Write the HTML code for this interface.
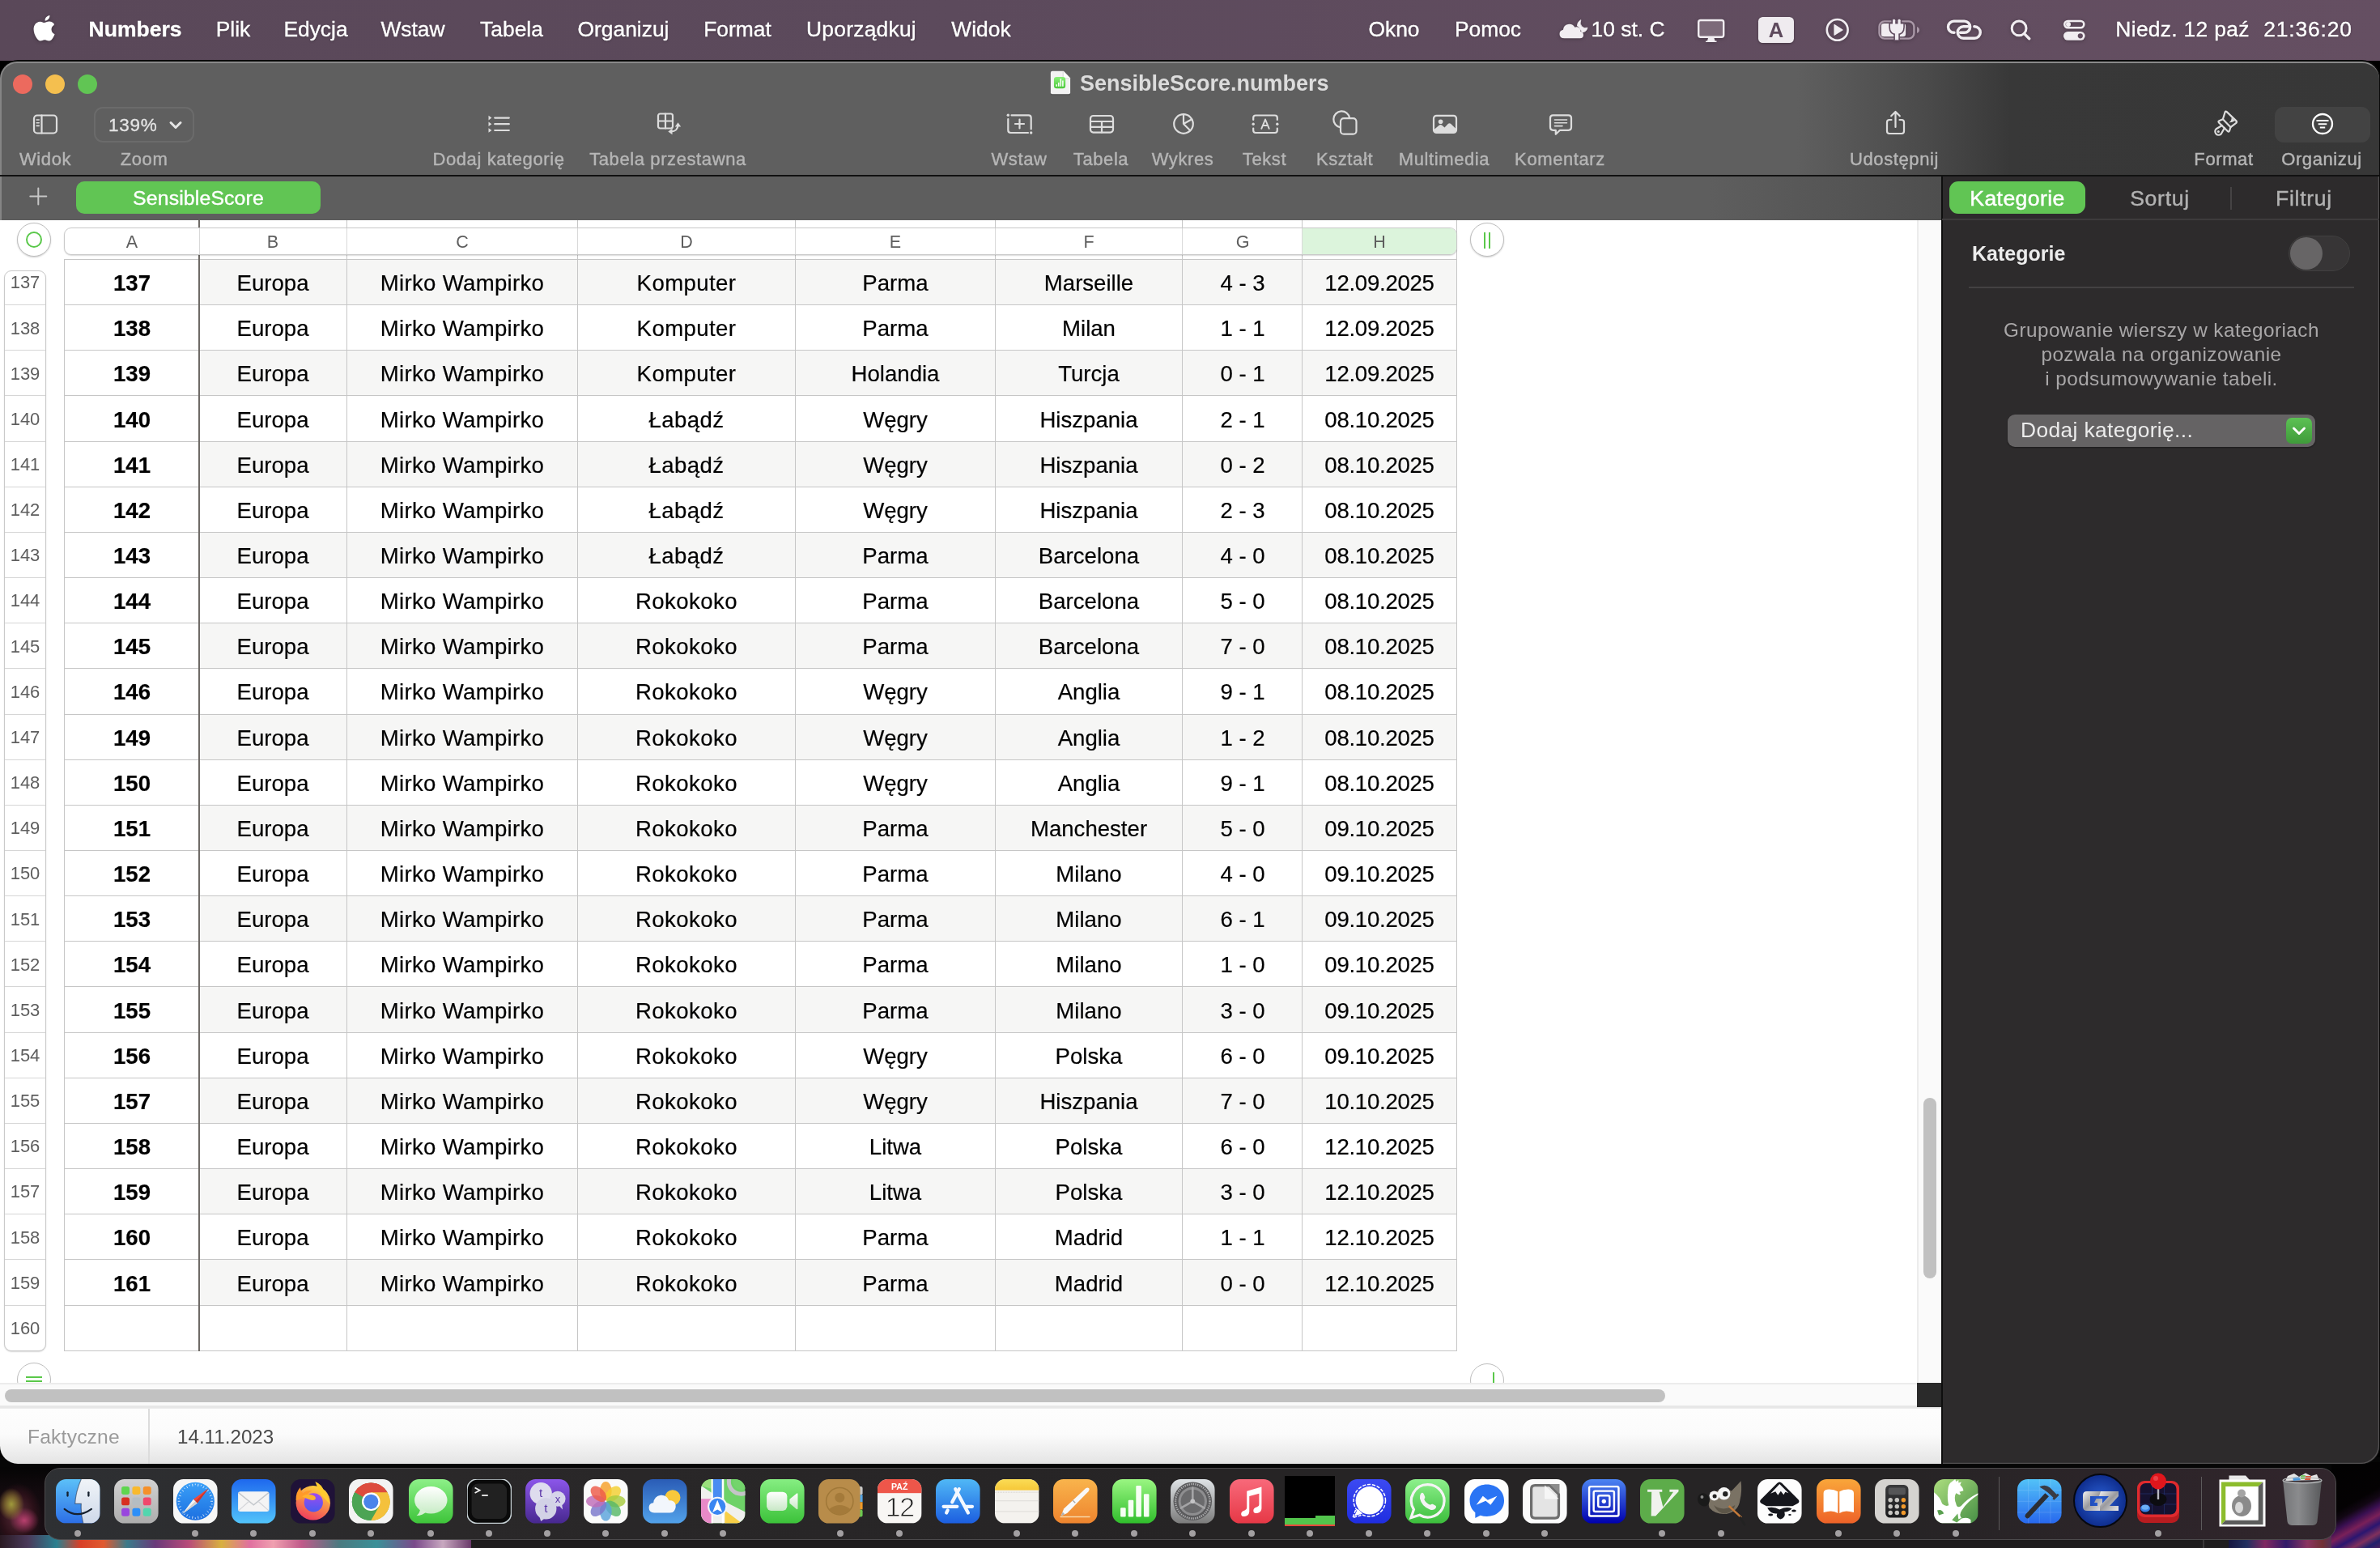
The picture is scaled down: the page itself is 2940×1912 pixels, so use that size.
<!DOCTYPE html>
<html><head><meta charset="utf-8"><title>Numbers</title>
<style>
html,body{margin:0;padding:0;width:2940px;height:1912px;overflow:hidden;}
body{width:2940px;height:1912px;overflow:hidden;position:relative;background:#000;font-family:"Liberation Sans", sans-serif;}
div,svg{box-sizing:border-box;}
.abs{position:absolute;}
.t{will-change:transform;}
#root{position:absolute;left:0;top:0;width:2940px;height:1912px;overflow:hidden;background:#000;}
</style></head><body><div id="root">
<div class="abs" style="left:0;top:1800px;width:2940px;height:112px;background:#060606"></div>
<div class="abs" style="left:582px;top:1896px;width:2171px;height:16px;background:#1f1d1e"></div>
<div class="abs" style="left:2721px;top:1896px;width:2px;height:16px;background:#3a3839"></div>
<div class="abs" style="left:0;top:1812px;width:70px;height:100px;background:radial-gradient(ellipse 16px 20px at 14px 46px,#a09a3c 0%,rgba(140,120,50,.7) 50%,rgba(90,40,50,0) 100%),radial-gradient(ellipse 18px 16px at 30px 66px,#b8406e 0%,rgba(150,50,90,.6) 55%,rgba(80,30,50,0) 100%),radial-gradient(ellipse 30px 40px at 22px 60px,#5a2a38 0%,#2a1018 70%,rgba(10,6,8,0) 100%),linear-gradient(180deg,#050505 0%,#120a0e 30%,#1c1016 100%)"></div>
<div class="abs" style="left:0;top:1896px;width:582px;height:16px;background:linear-gradient(90deg,#2a1a22 0%,#4a3a5a 6%,#2a8090 12%,#d84028 17%,#e05a30 22%,#3a7a8a 27%,#6a3a7a 33%,#b84a7a 40%,#d8b040 47%,#e070a0 53%,#f0a0b0 58%,#c05a8a 64%,#4a7a80 72%,#3a9098 80%,#7a4a8a 88%,#c8a8c0 94%,#6a3a6a 100%)"></div>
<div class="abs" style="left:2753px;top:1896px;width:187px;height:16px;background:linear-gradient(90deg,#161640 0%,#223060 12%,#802860 24%,#301a68 38%,#8a3460 52%,#703034 62%,#303084 76%,#7a2868 88%,#48226e 100%)"></div>
<div class="abs" style="left:2880px;top:1806px;width:60px;height:106px;background:linear-gradient(150deg,#020202 0%,#040203 46%,#120714 54%,#3a1052 62%,#7a2058 70%,#2a1670 78%,#80305c 86%,#20206c 93%,#4a2060 100%)"></div>
<div class="abs" style="left:0;top:0;width:2940px;height:75px;background:linear-gradient(90deg,#5a4859 0%,#5c4a5c 40%,#654f62 100%)"></div>
<svg class="abs" style="left:41px;top:19px;filter:drop-shadow(0 1px 2px rgba(0,0,0,.3))" width="30" height="35" viewBox="0 0 36 42"><path fill="#fff" d="M24.5 0c.2 2-.6 4-1.8 5.400-1.300 1.500-3.300 2.600-5.200 2.500-.3-2 .7-4 1.800-5.200C20.600 1.200 22.800.1 24.500 0zM30.800 14.300c-2.300 1.400-3.800 3.700-3.800 6.500 0 3.300 2 6 4.900 7.100-.6 1.900-1.500 3.700-2.600 5.300-1.600 2.300-3.300 4.600-5.900 4.600-2.600.1-3.400-1.500-6.300-1.500-2.900 0-3.900 1.500-6.300 1.600-2.500.1-4.500-2.500-6.100-4.800C1.400 28.300-1.100 19.800 2.300 14c1.700-2.900 4.700-4.700 8-4.800 2.500 0 4.800 1.700 6.300 1.700 1.500 0 4.400-2.100 7.400-1.800 1.300.1 4.800.5 7.100 3.800z"/></svg>
<div class="t" style="position:absolute;left:-232.75px;top:5.700000000000003px;width:800px;height:60px;line-height:60px;font-size:26.5px;color:#ffffff;font-weight:700;text-align:center;white-space:pre;text-shadow:0 1px 3px rgba(0,0,0,.28);letter-spacing:0px;-webkit-text-stroke:0.35px #fff;">Numbers</div>
<div class="t" style="position:absolute;left:-111.89999999999998px;top:5.700000000000003px;width:800px;height:60px;line-height:60px;font-size:26.4px;color:#ffffff;font-weight:400;text-align:center;white-space:pre;text-shadow:0 1px 3px rgba(0,0,0,.28);letter-spacing:0px;-webkit-text-stroke:0.35px #fff;">Plik</div>
<div class="t" style="position:absolute;left:-10.0px;top:5.700000000000003px;width:800px;height:60px;line-height:60px;font-size:26.4px;color:#ffffff;font-weight:400;text-align:center;white-space:pre;text-shadow:0 1px 3px rgba(0,0,0,.28);letter-spacing:0px;-webkit-text-stroke:0.35px #fff;">Edycja</div>
<div class="t" style="position:absolute;left:110.39999999999998px;top:5.700000000000003px;width:800px;height:60px;line-height:60px;font-size:26.4px;color:#ffffff;font-weight:400;text-align:center;white-space:pre;text-shadow:0 1px 3px rgba(0,0,0,.28);letter-spacing:0px;-webkit-text-stroke:0.35px #fff;">Wstaw</div>
<div class="t" style="position:absolute;left:231.5px;top:5.700000000000003px;width:800px;height:60px;line-height:60px;font-size:26.4px;color:#ffffff;font-weight:400;text-align:center;white-space:pre;text-shadow:0 1px 3px rgba(0,0,0,.28);letter-spacing:0px;-webkit-text-stroke:0.35px #fff;">Tabela</div>
<div class="t" style="position:absolute;left:369.75px;top:5.700000000000003px;width:800px;height:60px;line-height:60px;font-size:26.4px;color:#ffffff;font-weight:400;text-align:center;white-space:pre;text-shadow:0 1px 3px rgba(0,0,0,.28);letter-spacing:0px;-webkit-text-stroke:0.35px #fff;">Organizuj</div>
<div class="t" style="position:absolute;left:511.25px;top:5.700000000000003px;width:800px;height:60px;line-height:60px;font-size:26.4px;color:#ffffff;font-weight:400;text-align:center;white-space:pre;text-shadow:0 1px 3px rgba(0,0,0,.28);letter-spacing:0px;-webkit-text-stroke:0.35px #fff;">Format</div>
<div class="t" style="position:absolute;left:663.625px;top:5.700000000000003px;width:800px;height:60px;line-height:60px;font-size:26.4px;color:#ffffff;font-weight:400;text-align:center;white-space:pre;text-shadow:0 1px 3px rgba(0,0,0,.28);letter-spacing:0.25px;-webkit-text-stroke:0.35px #fff;">Uporządkuj</div>
<div class="t" style="position:absolute;left:812.25px;top:5.700000000000003px;width:800px;height:60px;line-height:60px;font-size:26.4px;color:#ffffff;font-weight:400;text-align:center;white-space:pre;text-shadow:0 1px 3px rgba(0,0,0,.28);letter-spacing:0px;-webkit-text-stroke:0.35px #fff;">Widok</div>
<div class="t" style="position:absolute;left:1321.6px;top:5.700000000000003px;width:800px;height:60px;line-height:60px;font-size:26.4px;color:#ffffff;font-weight:400;text-align:center;white-space:pre;text-shadow:0 1px 3px rgba(0,0,0,.28);letter-spacing:0px;-webkit-text-stroke:0.35px #fff;">Okno</div>
<div class="t" style="position:absolute;left:1437.7px;top:5.700000000000003px;width:800px;height:60px;line-height:60px;font-size:26.4px;color:#ffffff;font-weight:400;text-align:center;white-space:pre;text-shadow:0 1px 3px rgba(0,0,0,.28);letter-spacing:0px;-webkit-text-stroke:0.35px #fff;">Pomoc</div>
<div class="t" style="position:absolute;left:1611.2px;top:5.700000000000003px;width:800px;height:60px;line-height:60px;font-size:26.4px;color:#ffffff;font-weight:400;text-align:center;white-space:pre;text-shadow:0 1px 3px rgba(0,0,0,.28);letter-spacing:0px;-webkit-text-stroke:0.35px #fff;">10 st. C</div>
<div class="t" style="position:absolute;left:2295.85px;top:5.700000000000003px;width:800px;height:60px;line-height:60px;font-size:26.4px;color:#ffffff;font-weight:400;text-align:center;white-space:pre;text-shadow:0 1px 3px rgba(0,0,0,.28);letter-spacing:0.3px;-webkit-text-stroke:0.35px #fff;">Niedz. 12 paź</div>
<div class="t" style="position:absolute;left:2451.175px;top:5.700000000000003px;width:800px;height:60px;line-height:60px;font-size:26.4px;color:#ffffff;font-weight:400;text-align:center;white-space:pre;text-shadow:0 1px 3px rgba(0,0,0,.28);letter-spacing:0.85px;-webkit-text-stroke:0.35px #fff;">21:36:20</div>
<svg class="abs" style="left:1922px;top:20px;filter:drop-shadow(0 1px 2px rgba(0,0,0,.25))" width="44" height="32" viewBox="0 0 44 32"><path fill="#f1edf1" d="M10.500 27.300 Q4.500 27.300 4.500 22 Q4.500 17.600 9 16.800 Q9.400 11.200 15 10 Q20.600 9 23.400 13.800 Q26.200 12.600 28.600 14.600 Q30.600 16.400 30.400 19 Q34 19.800 34 23.200 Q34 27.300 29.800 27.300 Z"/><path fill="#f1edf1" d="M30.800 4.600 Q28.800 9.500 32 12.800 Q35 15.600 39 14.200 Q37.600 19.600 32.200 20 Q31.800 17.600 29.800 16 Q29.200 13.400 26.400 12 Q26.200 7.400 30.800 4.600Z" stroke="#f1edf1" stroke-width="0.800" stroke-linejoin="round"/></svg>
<svg class="abs" style="left:2094px;top:20px;filter:drop-shadow(0 1px 2px rgba(0,0,0,.25))" width="40" height="36" viewBox="0 0 40 36"><rect x="4.200" y="5" width="31" height="20.800" rx="2.500" fill="#7c6a79" stroke="#f1edf1" stroke-width="2.400"/><path fill="#f1edf1" d="M16 27H23.500L24.500 30.500H26.500V31.900H13V30.500H15Z"/></svg>
<div class="abs" style="left:2172px;top:21px;width:44px;height:32px;border-radius:5.500px;background:#efebef;box-shadow:0 1px 3px rgba(0,0,0,.3)"></div>
<div class="t" style="position:absolute;left:1794.0px;top:6.799999999999997px;width:800px;height:60px;line-height:60px;font-size:25.5px;color:#5e4a5d;font-weight:700;text-align:center;white-space:pre;">A</div>
<svg class="abs" style="left:2252px;top:19px;filter:drop-shadow(0 1px 2px rgba(0,0,0,.25))" width="36" height="36" viewBox="0 0 36 36"><circle cx="17.700" cy="17.900" r="12.900" fill="none" stroke="#f1edf1" stroke-width="2.600"/><path fill="#f1edf1" d="M14 11.600L24 17.900L14 24.200Z" stroke="#f1edf1" stroke-width="1.200" stroke-linejoin="round"/></svg>
<svg class="abs" style="left:2316px;top:18px;filter:drop-shadow(0 1px 2px rgba(0,0,0,.25))" width="60" height="36" viewBox="0 0 60 36"><rect x="5.500" y="8.400" width="42.900" height="21.200" rx="6.500" fill="none" stroke="#a998a7" stroke-width="2.400"/><path d="M52 14.900Q55.100 16.200 55.100 19 Q55.100 21.800 52 23.100Z" fill="#a998a7"/><rect x="7.900" y="11.100" width="30.200" height="16.100" rx="3.200" fill="#f1edf1"/><g fill="#5f4b5e" stroke="#5f4b5e" stroke-width="3.200" stroke-linejoin="round"><rect x="22" y="5.800" width="3.200" height="7" rx="1.500"/><rect x="28.500" y="5.800" width="3.200" height="7" rx="1.500"/><path d="M18.900 11.400H35.300V15.500Q35.300 23.700 27.100 23.700Q18.900 23.700 18.900 15.500Z"/><rect x="24.900" y="22" width="4.400" height="9.500"/></g><g fill="#f1edf1"><rect x="22" y="5.800" width="3.200" height="7" rx="1.500"/><rect x="28.500" y="5.800" width="3.200" height="7" rx="1.500"/><path d="M18.900 11.400H35.300V15.500Q35.300 23.700 27.100 23.700Q18.900 23.700 18.900 15.500Z"/><rect x="24.900" y="22" width="4.400" height="9.300"/></g></svg>
<svg class="abs" style="left:2400px;top:18px;filter:drop-shadow(0 1px 2px rgba(0,0,0,.25))" width="54" height="36" viewBox="0 0 54 36"><path d="M14 22.300H13.600A7.100 7.100 0 0 1 13.600 8.100H26.600A7.100 7.100 0 0 1 26.600 22.300H21.500" fill="none" stroke="#f1edf1" stroke-width="3.400" stroke-linecap="round"/><path d="M38.800 14.800H39.100A7.200 7.200 0 0 1 39.100 29.200H25.400A7.200 7.200 0 0 1 25.400 14.800H31.300" fill="none" stroke="#f1edf1" stroke-width="3.400" stroke-linecap="round"/></svg>
<svg class="abs" style="left:2478px;top:18px;filter:drop-shadow(0 1px 2px rgba(0,0,0,.25))" width="36" height="36" viewBox="0 0 36 36"><circle cx="16.100" cy="16.900" r="8.900" fill="none" stroke="#f1edf1" stroke-width="3"/><path d="M22.600 23.600L28.700 29.700" stroke="#f1edf1" stroke-width="3.400" stroke-linecap="round"/></svg>
<svg class="abs" style="left:2544px;top:20px;filter:drop-shadow(0 1px 2px rgba(0,0,0,.25))" width="36" height="34" viewBox="0 0 36 34"><rect x="6.300" y="6" width="24" height="8.200" rx="4.100" fill="none" stroke="#f1edf1" stroke-width="2.600"/><circle cx="11" cy="10.100" r="3" fill="#f1edf1"/><rect x="5" y="18.900" width="26.600" height="10.900" rx="5.450" fill="#f1edf1"/><circle cx="25.800" cy="24.350" r="3.100" fill="#614c5f"/></svg>
<div class="abs" style="left:0;top:74px;width:2940px;height:1735px;background:#0a0a0a;border-radius:22px 22px 22px 22px"></div>
<div class="abs" style="left:0;top:76px;width:2939px;height:142px;border-radius:21px 21px 0 0;background:linear-gradient(90deg,#5f5f5f 0%,#5f5f5f 75.500%,#4a4a4a 81%,#383838 84.500%,#373737 100%);border-top:2px solid #8a8a8a;border-left:2px solid #858585"></div>
<div class="abs" style="left:0;top:216px;width:2939px;height:2px;background:#111"></div>
<div class="abs" style="left:0;top:218px;width:2398px;height:54px;background:linear-gradient(90deg,#5e5e5e 0%,#5e5e5e 88%,#4e4e4e 100%);border-left:2px solid #858585"></div>
<div class="abs" style="left:16px;top:92px;width:24px;height:24px;border-radius:12px;background:#ec6a5e"></div>
<div class="abs" style="left:56px;top:92px;width:24px;height:24px;border-radius:12px;background:#f4bf4f"></div>
<div class="abs" style="left:96px;top:92px;width:24px;height:24px;border-radius:12px;background:#61c554"></div>
<svg class="abs" style="left:1285px;top:78px" width="60" height="50" viewBox="0 0 60 50"><defs><linearGradient id="gti" x1="0" y1="0" x2="0" y2="1"><stop offset="0" stop-color="#8af078"/><stop offset="1" stop-color="#4cc83c"/></linearGradient></defs><path d="M15 9.850H28.700L37.100 18.400V36.200Q37.100 38.300 35 38.300H15Q12.900 38.300 12.900 36.200V12Q12.900 9.850 15 9.850Z" fill="#f3f3f3"/><path d="M28.700 9.850L37.100 18.400H30.700Q28.700 18.400 28.700 16.400Z" fill="#fdfdfd"/><path d="M28.200 10.500V16.600Q28.200 18.900 30.500 18.900H36.600" fill="none" stroke="#d0d0d0" stroke-width=".8"/><rect x="16.950" y="16.950" width="14.250" height="14.250" rx="3.300" fill="url(#gti)"/><path d="M20.200 28.700V26.200M22.800 28.700V23.900M25.350 28.700V19.200M27.900 28.700V21.600" stroke="#fff" stroke-width="1.500"/><path d="M12.900 38.900H37.100" stroke="#3a3a3a" stroke-width=".8" opacity=".5"/></svg>
<div class="t" style="position:absolute;left:1333.7px;top:73.3px;width:1200px;height:60px;line-height:60px;font-size:27px;color:#dcdcdc;font-weight:700;text-align:left;white-space:pre;">SensibleScore.numbers</div>
<div class="t" style="position:absolute;left:-343.7px;top:167.0px;width:800px;height:60px;line-height:60px;font-size:22px;color:#b6b6b6;font-weight:400;text-align:center;white-space:pre;letter-spacing:0.600px;-webkit-text-stroke:0.400px #b6b6b6;">Widok</div>
<div class="t" style="position:absolute;left:-221.7px;top:167.0px;width:800px;height:60px;line-height:60px;font-size:22px;color:#b6b6b6;font-weight:400;text-align:center;white-space:pre;letter-spacing:0.600px;-webkit-text-stroke:0.400px #b6b6b6;">Zoom</div>
<div class="t" style="position:absolute;left:216.29999999999995px;top:167.0px;width:800px;height:60px;line-height:60px;font-size:22px;color:#b6b6b6;font-weight:400;text-align:center;white-space:pre;letter-spacing:0.600px;-webkit-text-stroke:0.400px #b6b6b6;">Dodaj kategorię</div>
<div class="t" style="position:absolute;left:425.29999999999995px;top:167.0px;width:800px;height:60px;line-height:60px;font-size:22px;color:#b6b6b6;font-weight:400;text-align:center;white-space:pre;letter-spacing:0.600px;-webkit-text-stroke:0.400px #b6b6b6;">Tabela przestawna</div>
<div class="t" style="position:absolute;left:859.3px;top:167.0px;width:800px;height:60px;line-height:60px;font-size:22px;color:#b6b6b6;font-weight:400;text-align:center;white-space:pre;letter-spacing:0.600px;-webkit-text-stroke:0.400px #b6b6b6;">Wstaw</div>
<div class="t" style="position:absolute;left:960.3px;top:167.0px;width:800px;height:60px;line-height:60px;font-size:22px;color:#b6b6b6;font-weight:400;text-align:center;white-space:pre;letter-spacing:0.600px;-webkit-text-stroke:0.400px #b6b6b6;">Tabela</div>
<div class="t" style="position:absolute;left:1061.3px;top:167.0px;width:800px;height:60px;line-height:60px;font-size:22px;color:#b6b6b6;font-weight:400;text-align:center;white-space:pre;letter-spacing:0.600px;-webkit-text-stroke:0.400px #b6b6b6;">Wykres</div>
<div class="t" style="position:absolute;left:1162.3px;top:167.0px;width:800px;height:60px;line-height:60px;font-size:22px;color:#b6b6b6;font-weight:400;text-align:center;white-space:pre;letter-spacing:0.600px;-webkit-text-stroke:0.400px #b6b6b6;">Tekst</div>
<div class="t" style="position:absolute;left:1261.3px;top:167.0px;width:800px;height:60px;line-height:60px;font-size:22px;color:#b6b6b6;font-weight:400;text-align:center;white-space:pre;letter-spacing:0.600px;-webkit-text-stroke:0.400px #b6b6b6;">Kształt</div>
<div class="t" style="position:absolute;left:1384.3px;top:167.0px;width:800px;height:60px;line-height:60px;font-size:22px;color:#b6b6b6;font-weight:400;text-align:center;white-space:pre;letter-spacing:0.600px;-webkit-text-stroke:0.400px #b6b6b6;">Multimedia</div>
<div class="t" style="position:absolute;left:1527.3px;top:167.0px;width:800px;height:60px;line-height:60px;font-size:22px;color:#b6b6b6;font-weight:400;text-align:center;white-space:pre;letter-spacing:0.600px;-webkit-text-stroke:0.400px #b6b6b6;">Komentarz</div>
<div class="t" style="position:absolute;left:1940.3000000000002px;top:167.0px;width:800px;height:60px;line-height:60px;font-size:22px;color:#b6b6b6;font-weight:400;text-align:center;white-space:pre;letter-spacing:0.600px;-webkit-text-stroke:0.400px #b6b6b6;">Udostępnij</div>
<div class="t" style="position:absolute;left:2347.3px;top:167.0px;width:800px;height:60px;line-height:60px;font-size:22px;color:#b6b6b6;font-weight:400;text-align:center;white-space:pre;letter-spacing:0.600px;-webkit-text-stroke:0.400px #b6b6b6;">Format</div>
<div class="t" style="position:absolute;left:2468.3px;top:167.0px;width:800px;height:60px;line-height:60px;font-size:22px;color:#b6b6b6;font-weight:400;text-align:center;white-space:pre;letter-spacing:0.600px;-webkit-text-stroke:0.400px #b6b6b6;">Organizuj</div>
<div class="abs" style="left:116px;top:132px;width:124px;height:44px;border-radius:11px;border:2px solid #6b6b6b"></div>
<div class="t" style="position:absolute;left:134px;top:124.5px;width:1200px;height:60px;line-height:60px;font-size:22.5px;color:#e4e4e4;font-weight:400;text-align:left;white-space:pre;letter-spacing:0.700px;-webkit-text-stroke:0.300px #e4e4e4;">139%</div>
<div class="abs" style="left:2810px;top:132px;width:118px;height:44px;border-radius:11px;background:#434343"></div>
<svg class="abs" style="left:35px;top:230px" width="24" height="24" viewBox="0 0 24 24"><path d="M12.300 2.500V22.500M2.300 12.500H22.300" stroke="#c6c6c6" stroke-width="2" stroke-linecap="round"/></svg>
<div class="abs" style="left:94px;top:224px;width:302px;height:40px;border-radius:10px;background:#61c554"></div>
<div class="t" style="position:absolute;left:-155.0px;top:214.6px;width:800px;height:60px;line-height:60px;font-size:24.8px;color:#fff;font-weight:400;text-align:center;white-space:pre;letter-spacing:0.150px;-webkit-text-stroke:0.400px #fff;">SensibleScore</div>
<div class="abs" style="left:0;top:272px;width:2398px;height:1468px;background:#fff"></div>
<div class="abs" style="left:0;top:1736px;width:2398px;height:72px;border-radius:0 0 0 22px;background:linear-gradient(180deg,#e7e7e7 0,#e7e7e7 3.200px,#fdfdfd 4.500px,#fbfbfb 50%,#e4e4e4 100%)"></div>
<div class="abs" style="left:183px;top:1740px;width:2px;height:68px;background:#dcdcdc"></div>
<div class="t" style="position:absolute;left:34px;top:1745.0px;width:1200px;height:60px;line-height:60px;font-size:24.6px;color:#9a9a9a;font-weight:400;text-align:left;white-space:pre;letter-spacing:0.200px;">Faktyczne</div>
<div class="t" style="position:absolute;left:219px;top:1745.0px;width:1200px;height:60px;line-height:60px;font-size:24.2px;color:#4a4a4a;font-weight:400;text-align:left;white-space:pre;">14.11.2023</div>
<div class="abs" style="left:0;top:1708px;width:2368px;height:28px;background:#fafafa;border-top:2px solid #ececec"></div>
<div class="abs" style="left:6px;top:1716px;width:2051px;height:16px;border-radius:8px;background:#c1c1c1"></div>
<div class="abs" style="left:2368px;top:272px;width:30px;height:1436px;background:#fafafa;border-left:2px solid #ececec"></div>
<div class="abs" style="left:2376px;top:1356px;width:16px;height:223px;border-radius:8px;background:#c1c1c1"></div>
<div class="abs" style="left:2368px;top:1708px;width:30px;height:30px;background:#2a2a2a"></div>
<svg class="abs" style="left:38px;top:138px;" width="36" height="30" viewBox="0 0 36 30"><rect x="4" y="4.5" width="28" height="22" rx="4" fill="none" stroke="#dddddd" stroke-width="2.2" stroke-linecap="round" stroke-linejoin="round"/><path d="M13.500 4.500V26.500" fill="none" stroke="#dddddd" stroke-width="2.2" stroke-linecap="round" stroke-linejoin="round"/><path d="M7.200 10h3M7.200 13.700h3M7.200 17.400h3" fill="none" stroke="#dddddd" stroke-width="1.600" stroke-linecap="round"/></svg>
<svg class="abs" style="left:206px;top:146px;" width="22" height="16" viewBox="0 0 22 16"><path d="M5 5.500 L11 11.500 L17 5.500" fill="none" stroke="#e4e4e4" stroke-width="3" stroke-linecap="round" stroke-linejoin="round"/></svg>
<svg class="abs" style="left:602px;top:139px;" width="30" height="30" viewBox="0 0 30 30"><path d="M9.200 6.6H26.800" fill="none" stroke="#dddddd" stroke-width="2.2" stroke-linecap="round" stroke-linejoin="round"/><path d="M1.500 3.8L5.400 6.6L1.500 9.399999999999999Z" fill="#dddddd"/><path d="M9.200 14.2H26.800" fill="none" stroke="#dddddd" stroke-width="2.2" stroke-linecap="round" stroke-linejoin="round"/><path d="M1.500 11.399999999999999L5.400 14.2L1.500 17.0Z" fill="#dddddd"/><path d="M9.200 22H26.800" fill="none" stroke="#dddddd" stroke-width="2.2" stroke-linecap="round" stroke-linejoin="round"/><path d="M1.500 19.2L5.400 22L1.500 24.8Z" fill="#dddddd"/></svg>
<svg class="abs" style="left:808px;top:136px;" width="36" height="32" viewBox="0 0 36 32"><rect x="5" y="4.500" width="18" height="18" rx="2.500" fill="none" stroke="#dddddd" stroke-width="2.2" stroke-linecap="round" stroke-linejoin="round"/><path d="M14 4.500V22.500M5 13.500H23" fill="none" stroke="#dddddd" stroke-width="2.2" stroke-linecap="round" stroke-linejoin="round" stroke-width="2"/><path d="M29.500 18 C29.500 23.500 26 26.500 21 26.500" fill="none" stroke="#dddddd" stroke-width="2.200" stroke-linecap="round"/><path d="M25.800 20.500L29.500 15.300L33.200 20.500Z" fill="#dddddd"/><path d="M22.500 22.800L17.300 26.500L22.500 30.200Z" fill="#dddddd"/></svg>
<svg class="abs" style="left:1240px;top:137px;" width="40" height="32" viewBox="0 0 40 32"><path d="M9.500 5.300H30.500Q33.700 5.300 33.700 8.500V22.500M30 27H8.500Q5.300 27 5.300 23.800V10" fill="none" stroke="#dddddd" stroke-width="2.2" stroke-linecap="round" stroke-linejoin="round"/><circle cx="5.300" cy="5.300" r="1.700" fill="#dddddd"/><circle cx="33.700" cy="27" r="1.700" fill="#dddddd"/><path d="M19.500 10.500V21.500M14 16H25" fill="none" stroke="#dddddd" stroke-width="2.2" stroke-linecap="round" stroke-linejoin="round"/></svg>
<svg class="abs" style="left:1342px;top:138px;" width="38" height="30" viewBox="0 0 38 30"><rect x="5" y="5" width="28" height="20.600" rx="3.500" fill="none" stroke="#dddddd" stroke-width="2.2" stroke-linecap="round" stroke-linejoin="round"/><path d="M5 12H33M5 18.800H33M19 12V25.600" fill="none" stroke="#dddddd" stroke-width="2.2" stroke-linecap="round" stroke-linejoin="round" stroke-width="2"/></svg>
<svg class="abs" style="left:1446px;top:137px;" width="32" height="32" viewBox="0 0 32 32"><circle cx="16" cy="16" r="11.800" fill="none" stroke="#dddddd" stroke-width="2.2" stroke-linecap="round" stroke-linejoin="round"/><path d="M16 4.200V16L26.300 10.300M16 16L24.300 24.300" fill="none" stroke="#dddddd" stroke-width="2.2" stroke-linecap="round" stroke-linejoin="round"/></svg>
<svg class="abs" style="left:1543px;top:137px;" width="40" height="32" viewBox="0 0 40 32"><path d="M5.200 11V8.500Q5.200 5.500 8.200 5.500H31.800Q34.800 5.500 34.800 8.500V11M5.200 21.500V24Q5.200 27 8.200 27H31.800Q34.800 27 34.800 24V21.500" fill="none" stroke="#dddddd" stroke-width="2.2" stroke-linecap="round" stroke-linejoin="round"/><circle cx="5.200" cy="16.200" r="1.700" fill="#dddddd"/><circle cx="34.800" cy="16.200" r="1.700" fill="#dddddd"/><path d="M15.300 21.800L20 10.500L24.700 21.800M17 18H23" fill="none" stroke="#dddddd" stroke-width="1.900" stroke-linecap="round" stroke-linejoin="round"/></svg>
<svg class="abs" style="left:1643px;top:134px;" width="40" height="36" viewBox="0 0 40 36"><path d="M12.800 23.300 A10 10 0 1 1 24.200 11.800" fill="none" stroke="#dddddd" stroke-width="2.2" stroke-linecap="round" stroke-linejoin="round"/><rect x="13" y="12.200" width="19.500" height="19.500" rx="4" fill="none" stroke="#dddddd" stroke-width="2.2" stroke-linecap="round" stroke-linejoin="round"/></svg>
<svg class="abs" style="left:1766px;top:138px;" width="38" height="30" viewBox="0 0 38 30"><rect x="5" y="4.800" width="28" height="21.200" rx="3.500" fill="none" stroke="#dddddd" stroke-width="2.2" stroke-linecap="round" stroke-linejoin="round"/><circle cx="13.600" cy="12.300" r="2.800" fill="#dddddd"/><path d="M5.500 22L12 16.500Q13.500 15.300 15 16.500L18.500 19.500L23 14.800Q24.500 13.500 26 14.800L32.500 21V23Q32.500 25.500 30 25.500H8Q5.500 25.500 5.500 23Z" fill="#dddddd"/></svg>
<svg class="abs" style="left:1910px;top:137px;" width="36" height="34" viewBox="0 0 36 34"><path d="M8.500 5.300H27.500Q31 5.300 31 8.800V20.300Q31 23.800 27.500 23.800H17L11.800 28.800V23.800H8.500Q5 23.800 5 20.300V8.800Q5 5.300 8.500 5.300Z" fill="none" stroke="#dddddd" stroke-width="2.2" stroke-linecap="round" stroke-linejoin="round"/><path d="M10.500 11H25.500M10.500 14.800H25.500M10.500 18.600H20" fill="none" stroke="#dddddd" stroke-width="1.600" stroke-linecap="round"/></svg>
<svg class="abs" style="left:2324px;top:132px;" width="36" height="40" viewBox="0 0 36 40"><path d="M12.500 16H10Q7 16 7 19V30Q7 33 10 33H25Q28 33 28 30V19Q28 16 25 16H22.500" fill="none" stroke="#dddddd" stroke-width="2.2" stroke-linecap="round" stroke-linejoin="round"/><path d="M17.500 6.500V25M12.200 11.300L17.500 6L22.800 11.300" fill="none" stroke="#dddddd" stroke-width="2.2" stroke-linecap="round" stroke-linejoin="round"/></svg>
<svg class="abs" style="left:2720px;top:126px;" width="60" height="52" viewBox="0 0 60 52"><path d="M25.900 21.300L28.500 12.700Q29.200 10.700 30.700 12.100L42.200 23.100Q43.600 24.500 42.300 25.900L35.400 31.100Z" fill="none" stroke="#dddddd" stroke-width="2.2" stroke-linecap="round" stroke-linejoin="round"/><path d="M25.900 21.300L21.400 23.300Q19.700 24.200 21 25.500L32 36.200Q33.300 37.400 34 35.700L35.400 31.100" fill="none" stroke="#dddddd" stroke-width="2.2" stroke-linecap="round" stroke-linejoin="round"/><path d="M24.800 29L17.600 33.300A4.300 4.300 0 1 0 23.700 39.500L27.900 32" fill="none" stroke="#dddddd" stroke-width="2.2" stroke-linecap="round" stroke-linejoin="round"/><circle cx="20.400" cy="36.500" r="1.500" fill="#dddddd"/><path d="M33.300 25.400Q36.800 23.800 36.600 19.300L40.800 23.300Q38 25.300 33.300 25.400Z" fill="#dddddd"/></svg>
<svg class="abs" style="left:2853px;top:137px;" width="32" height="32" viewBox="0 0 32 32"><circle cx="16" cy="16" r="12" fill="none" stroke="#fff" stroke-width="2.300"/><path d="M8.500 12H23.500M10.700 16.300H21.300M12.800 20.600H19.200" fill="none" stroke="#fff" stroke-width="2" stroke-linecap="butt"/></svg>
<div class="abs" style="left:21px;top:275px;width:42px;height:42px;border-radius:21px;background:#fff;border:1.5px solid #bdbdbd;box-shadow:0 1px 2px rgba(0,0,0,.18)"></div>
<div class="abs" style="left:32px;top:286px;width:20px;height:20px;border-radius:10px;border:2px solid #5ac84a"></div>
<div class="abs" style="left:1816px;top:275px;width:42px;height:42px;border-radius:21px;background:#fff;border:1.5px solid #bdbdbd;box-shadow:0 1px 2px rgba(0,0,0,.18)"></div>
<div class="abs" style="left:1833px;top:287px;width:2px;height:20px;background:#5ac84a"></div>
<div class="abs" style="left:1839px;top:287px;width:2px;height:20px;background:#5ac84a"></div>
<div class="abs" style="left:0;top:1680px;width:2369px;height:28px;overflow:hidden"><div class="abs" style="left:21px;top:3px;width:42px;height:42px;border-radius:21px;border:1.5px solid #bdbdbd;background:#fff"></div><div class="abs" style="left:32px;top:20px;width:20px;height:2px;background:#5ac84a"></div><div class="abs" style="left:32px;top:25px;width:20px;height:2px;background:#5ac84a"></div><div class="abs" style="left:1816px;top:4px;width:42px;height:42px;border-radius:21px;border:1.5px solid #bdbdbd;background:#fff"></div><div class="abs" style="left:1844px;top:15px;width:2px;height:14px;background:#5ac84a"></div></div>
<div class="abs" style="left:5px;top:334px;width:52px;height:1335px;border-radius:9px;background:#fff;border:1px solid #c9c9c9;box-shadow:0 1px 1.5px rgba(0,0,0,.15)"></div>
<div class="abs" style="left:247px;top:320.50px;width:1552.5px;height:56.16px;background:#f6f6f5"></div>
<div class="abs" style="left:247px;top:432.81px;width:1552.5px;height:56.16px;background:#f6f6f5"></div>
<div class="abs" style="left:247px;top:545.12px;width:1552.5px;height:56.16px;background:#f6f6f5"></div>
<div class="abs" style="left:247px;top:657.44px;width:1552.5px;height:56.16px;background:#f6f6f5"></div>
<div class="abs" style="left:247px;top:769.75px;width:1552.5px;height:56.16px;background:#f6f6f5"></div>
<div class="abs" style="left:247px;top:882.06px;width:1552.5px;height:56.16px;background:#f6f6f5"></div>
<div class="abs" style="left:247px;top:994.37px;width:1552.5px;height:56.16px;background:#f6f6f5"></div>
<div class="abs" style="left:247px;top:1106.68px;width:1552.5px;height:56.16px;background:#f6f6f5"></div>
<div class="abs" style="left:247px;top:1219.00px;width:1552.5px;height:56.16px;background:#f6f6f5"></div>
<div class="abs" style="left:247px;top:1331.31px;width:1552.5px;height:56.16px;background:#f6f6f5"></div>
<div class="abs" style="left:247px;top:1443.62px;width:1552.5px;height:56.16px;background:#f6f6f5"></div>
<div class="abs" style="left:247px;top:1555.93px;width:1552.5px;height:56.16px;background:#f6f6f5"></div>
<div class="t" style="position:absolute;left:-369.0px;top:319.378px;width:800px;height:60px;line-height:60px;font-size:22px;color:#5e5e5e;font-weight:400;text-align:center;white-space:pre;">137</div>
<div class="t" style="position:absolute;left:-237.25px;top:320.078px;width:800px;height:60px;line-height:60px;font-size:27.6px;color:#000;font-weight:700;text-align:center;white-space:pre;-webkit-text-stroke:0.200px #000;letter-spacing:0px;">137</div>
<div class="t" style="position:absolute;left:-63.0px;top:320.078px;width:800px;height:60px;line-height:60px;font-size:27.6px;color:#000;font-weight:400;text-align:center;white-space:pre;-webkit-text-stroke:0.200px #000;letter-spacing:0px;">Europa</div>
<div class="t" style="position:absolute;left:170.89999999999998px;top:320.078px;width:800px;height:60px;line-height:60px;font-size:27.6px;color:#000;font-weight:400;text-align:center;white-space:pre;-webkit-text-stroke:0.200px #000;letter-spacing:0.3px;">Mirko Wampirko</div>
<div class="t" style="position:absolute;left:448.20000000000005px;top:320.078px;width:800px;height:60px;line-height:60px;font-size:27.6px;color:#000;font-weight:400;text-align:center;white-space:pre;-webkit-text-stroke:0.200px #000;letter-spacing:0.4px;">Komputer</div>
<div class="t" style="position:absolute;left:705.875px;top:320.078px;width:800px;height:60px;line-height:60px;font-size:27.6px;color:#000;font-weight:400;text-align:center;white-space:pre;-webkit-text-stroke:0.200px #000;letter-spacing:0px;">Parma</div>
<div class="t" style="position:absolute;left:944.875px;top:320.078px;width:800px;height:60px;line-height:60px;font-size:27.6px;color:#000;font-weight:400;text-align:center;white-space:pre;-webkit-text-stroke:0.200px #000;letter-spacing:0px;">Marseille</div>
<div class="t" style="position:absolute;left:1134.5px;top:320.078px;width:800px;height:60px;line-height:60px;font-size:27.6px;color:#000;font-weight:400;text-align:center;white-space:pre;-webkit-text-stroke:0.200px #000;letter-spacing:0px;">4 - 3</div>
<div class="t" style="position:absolute;left:1303.86px;top:320.078px;width:800px;height:60px;line-height:60px;font-size:27.6px;color:#000;font-weight:400;text-align:center;white-space:pre;-webkit-text-stroke:0.200px #000;letter-spacing:-0.28px;">12.09.2025</div>
<div class="t" style="position:absolute;left:-369.0px;top:375.534px;width:800px;height:60px;line-height:60px;font-size:22px;color:#5e5e5e;font-weight:400;text-align:center;white-space:pre;">138</div>
<div class="t" style="position:absolute;left:-237.25px;top:376.234px;width:800px;height:60px;line-height:60px;font-size:27.6px;color:#000;font-weight:700;text-align:center;white-space:pre;-webkit-text-stroke:0.200px #000;letter-spacing:0px;">138</div>
<div class="t" style="position:absolute;left:-63.0px;top:376.234px;width:800px;height:60px;line-height:60px;font-size:27.6px;color:#000;font-weight:400;text-align:center;white-space:pre;-webkit-text-stroke:0.200px #000;letter-spacing:0px;">Europa</div>
<div class="t" style="position:absolute;left:170.89999999999998px;top:376.234px;width:800px;height:60px;line-height:60px;font-size:27.6px;color:#000;font-weight:400;text-align:center;white-space:pre;-webkit-text-stroke:0.200px #000;letter-spacing:0.3px;">Mirko Wampirko</div>
<div class="t" style="position:absolute;left:448.20000000000005px;top:376.234px;width:800px;height:60px;line-height:60px;font-size:27.6px;color:#000;font-weight:400;text-align:center;white-space:pre;-webkit-text-stroke:0.200px #000;letter-spacing:0.4px;">Komputer</div>
<div class="t" style="position:absolute;left:705.875px;top:376.234px;width:800px;height:60px;line-height:60px;font-size:27.6px;color:#000;font-weight:400;text-align:center;white-space:pre;-webkit-text-stroke:0.200px #000;letter-spacing:0px;">Parma</div>
<div class="t" style="position:absolute;left:944.875px;top:376.234px;width:800px;height:60px;line-height:60px;font-size:27.6px;color:#000;font-weight:400;text-align:center;white-space:pre;-webkit-text-stroke:0.200px #000;letter-spacing:0px;">Milan</div>
<div class="t" style="position:absolute;left:1134.5px;top:376.234px;width:800px;height:60px;line-height:60px;font-size:27.6px;color:#000;font-weight:400;text-align:center;white-space:pre;-webkit-text-stroke:0.200px #000;letter-spacing:0px;">1 - 1</div>
<div class="t" style="position:absolute;left:1303.86px;top:376.234px;width:800px;height:60px;line-height:60px;font-size:27.6px;color:#000;font-weight:400;text-align:center;white-space:pre;-webkit-text-stroke:0.200px #000;letter-spacing:-0.28px;">12.09.2025</div>
<div class="t" style="position:absolute;left:-369.0px;top:431.69px;width:800px;height:60px;line-height:60px;font-size:22px;color:#5e5e5e;font-weight:400;text-align:center;white-space:pre;">139</div>
<div class="t" style="position:absolute;left:-237.25px;top:432.39px;width:800px;height:60px;line-height:60px;font-size:27.6px;color:#000;font-weight:700;text-align:center;white-space:pre;-webkit-text-stroke:0.200px #000;letter-spacing:0px;">139</div>
<div class="t" style="position:absolute;left:-63.0px;top:432.39px;width:800px;height:60px;line-height:60px;font-size:27.6px;color:#000;font-weight:400;text-align:center;white-space:pre;-webkit-text-stroke:0.200px #000;letter-spacing:0px;">Europa</div>
<div class="t" style="position:absolute;left:170.89999999999998px;top:432.39px;width:800px;height:60px;line-height:60px;font-size:27.6px;color:#000;font-weight:400;text-align:center;white-space:pre;-webkit-text-stroke:0.200px #000;letter-spacing:0.3px;">Mirko Wampirko</div>
<div class="t" style="position:absolute;left:448.20000000000005px;top:432.39px;width:800px;height:60px;line-height:60px;font-size:27.6px;color:#000;font-weight:400;text-align:center;white-space:pre;-webkit-text-stroke:0.200px #000;letter-spacing:0.4px;">Komputer</div>
<div class="t" style="position:absolute;left:705.875px;top:432.39px;width:800px;height:60px;line-height:60px;font-size:27.6px;color:#000;font-weight:400;text-align:center;white-space:pre;-webkit-text-stroke:0.200px #000;letter-spacing:0px;">Holandia</div>
<div class="t" style="position:absolute;left:944.875px;top:432.39px;width:800px;height:60px;line-height:60px;font-size:27.6px;color:#000;font-weight:400;text-align:center;white-space:pre;-webkit-text-stroke:0.200px #000;letter-spacing:0px;">Turcja</div>
<div class="t" style="position:absolute;left:1134.5px;top:432.39px;width:800px;height:60px;line-height:60px;font-size:27.6px;color:#000;font-weight:400;text-align:center;white-space:pre;-webkit-text-stroke:0.200px #000;letter-spacing:0px;">0 - 1</div>
<div class="t" style="position:absolute;left:1303.86px;top:432.39px;width:800px;height:60px;line-height:60px;font-size:27.6px;color:#000;font-weight:400;text-align:center;white-space:pre;-webkit-text-stroke:0.200px #000;letter-spacing:-0.28px;">12.09.2025</div>
<div class="t" style="position:absolute;left:-369.0px;top:487.8459999999999px;width:800px;height:60px;line-height:60px;font-size:22px;color:#5e5e5e;font-weight:400;text-align:center;white-space:pre;">140</div>
<div class="t" style="position:absolute;left:-237.25px;top:488.54599999999994px;width:800px;height:60px;line-height:60px;font-size:27.6px;color:#000;font-weight:700;text-align:center;white-space:pre;-webkit-text-stroke:0.200px #000;letter-spacing:0px;">140</div>
<div class="t" style="position:absolute;left:-63.0px;top:488.54599999999994px;width:800px;height:60px;line-height:60px;font-size:27.6px;color:#000;font-weight:400;text-align:center;white-space:pre;-webkit-text-stroke:0.200px #000;letter-spacing:0px;">Europa</div>
<div class="t" style="position:absolute;left:170.89999999999998px;top:488.54599999999994px;width:800px;height:60px;line-height:60px;font-size:27.6px;color:#000;font-weight:400;text-align:center;white-space:pre;-webkit-text-stroke:0.200px #000;letter-spacing:0.3px;">Mirko Wampirko</div>
<div class="t" style="position:absolute;left:448.20000000000005px;top:488.54599999999994px;width:800px;height:60px;line-height:60px;font-size:27.6px;color:#000;font-weight:400;text-align:center;white-space:pre;-webkit-text-stroke:0.200px #000;letter-spacing:0.4px;">Łabądź</div>
<div class="t" style="position:absolute;left:705.875px;top:488.54599999999994px;width:800px;height:60px;line-height:60px;font-size:27.6px;color:#000;font-weight:400;text-align:center;white-space:pre;-webkit-text-stroke:0.200px #000;letter-spacing:0px;">Węgry</div>
<div class="t" style="position:absolute;left:944.875px;top:488.54599999999994px;width:800px;height:60px;line-height:60px;font-size:27.6px;color:#000;font-weight:400;text-align:center;white-space:pre;-webkit-text-stroke:0.200px #000;letter-spacing:0px;">Hiszpania</div>
<div class="t" style="position:absolute;left:1134.5px;top:488.54599999999994px;width:800px;height:60px;line-height:60px;font-size:27.6px;color:#000;font-weight:400;text-align:center;white-space:pre;-webkit-text-stroke:0.200px #000;letter-spacing:0px;">2 - 1</div>
<div class="t" style="position:absolute;left:1303.86px;top:488.54599999999994px;width:800px;height:60px;line-height:60px;font-size:27.6px;color:#000;font-weight:400;text-align:center;white-space:pre;-webkit-text-stroke:0.200px #000;letter-spacing:-0.28px;">08.10.2025</div>
<div class="t" style="position:absolute;left:-369.0px;top:544.002px;width:800px;height:60px;line-height:60px;font-size:22px;color:#5e5e5e;font-weight:400;text-align:center;white-space:pre;">141</div>
<div class="t" style="position:absolute;left:-237.25px;top:544.702px;width:800px;height:60px;line-height:60px;font-size:27.6px;color:#000;font-weight:700;text-align:center;white-space:pre;-webkit-text-stroke:0.200px #000;letter-spacing:0px;">141</div>
<div class="t" style="position:absolute;left:-63.0px;top:544.702px;width:800px;height:60px;line-height:60px;font-size:27.6px;color:#000;font-weight:400;text-align:center;white-space:pre;-webkit-text-stroke:0.200px #000;letter-spacing:0px;">Europa</div>
<div class="t" style="position:absolute;left:170.89999999999998px;top:544.702px;width:800px;height:60px;line-height:60px;font-size:27.6px;color:#000;font-weight:400;text-align:center;white-space:pre;-webkit-text-stroke:0.200px #000;letter-spacing:0.3px;">Mirko Wampirko</div>
<div class="t" style="position:absolute;left:448.20000000000005px;top:544.702px;width:800px;height:60px;line-height:60px;font-size:27.6px;color:#000;font-weight:400;text-align:center;white-space:pre;-webkit-text-stroke:0.200px #000;letter-spacing:0.4px;">Łabądź</div>
<div class="t" style="position:absolute;left:705.875px;top:544.702px;width:800px;height:60px;line-height:60px;font-size:27.6px;color:#000;font-weight:400;text-align:center;white-space:pre;-webkit-text-stroke:0.200px #000;letter-spacing:0px;">Węgry</div>
<div class="t" style="position:absolute;left:944.875px;top:544.702px;width:800px;height:60px;line-height:60px;font-size:27.6px;color:#000;font-weight:400;text-align:center;white-space:pre;-webkit-text-stroke:0.200px #000;letter-spacing:0px;">Hiszpania</div>
<div class="t" style="position:absolute;left:1134.5px;top:544.702px;width:800px;height:60px;line-height:60px;font-size:27.6px;color:#000;font-weight:400;text-align:center;white-space:pre;-webkit-text-stroke:0.200px #000;letter-spacing:0px;">0 - 2</div>
<div class="t" style="position:absolute;left:1303.86px;top:544.702px;width:800px;height:60px;line-height:60px;font-size:27.6px;color:#000;font-weight:400;text-align:center;white-space:pre;-webkit-text-stroke:0.200px #000;letter-spacing:-0.28px;">08.10.2025</div>
<div class="t" style="position:absolute;left:-369.0px;top:600.1579999999999px;width:800px;height:60px;line-height:60px;font-size:22px;color:#5e5e5e;font-weight:400;text-align:center;white-space:pre;">142</div>
<div class="t" style="position:absolute;left:-237.25px;top:600.858px;width:800px;height:60px;line-height:60px;font-size:27.6px;color:#000;font-weight:700;text-align:center;white-space:pre;-webkit-text-stroke:0.200px #000;letter-spacing:0px;">142</div>
<div class="t" style="position:absolute;left:-63.0px;top:600.858px;width:800px;height:60px;line-height:60px;font-size:27.6px;color:#000;font-weight:400;text-align:center;white-space:pre;-webkit-text-stroke:0.200px #000;letter-spacing:0px;">Europa</div>
<div class="t" style="position:absolute;left:170.89999999999998px;top:600.858px;width:800px;height:60px;line-height:60px;font-size:27.6px;color:#000;font-weight:400;text-align:center;white-space:pre;-webkit-text-stroke:0.200px #000;letter-spacing:0.3px;">Mirko Wampirko</div>
<div class="t" style="position:absolute;left:448.20000000000005px;top:600.858px;width:800px;height:60px;line-height:60px;font-size:27.6px;color:#000;font-weight:400;text-align:center;white-space:pre;-webkit-text-stroke:0.200px #000;letter-spacing:0.4px;">Łabądź</div>
<div class="t" style="position:absolute;left:705.875px;top:600.858px;width:800px;height:60px;line-height:60px;font-size:27.6px;color:#000;font-weight:400;text-align:center;white-space:pre;-webkit-text-stroke:0.200px #000;letter-spacing:0px;">Węgry</div>
<div class="t" style="position:absolute;left:944.875px;top:600.858px;width:800px;height:60px;line-height:60px;font-size:27.6px;color:#000;font-weight:400;text-align:center;white-space:pre;-webkit-text-stroke:0.200px #000;letter-spacing:0px;">Hiszpania</div>
<div class="t" style="position:absolute;left:1134.5px;top:600.858px;width:800px;height:60px;line-height:60px;font-size:27.6px;color:#000;font-weight:400;text-align:center;white-space:pre;-webkit-text-stroke:0.200px #000;letter-spacing:0px;">2 - 3</div>
<div class="t" style="position:absolute;left:1303.86px;top:600.858px;width:800px;height:60px;line-height:60px;font-size:27.6px;color:#000;font-weight:400;text-align:center;white-space:pre;-webkit-text-stroke:0.200px #000;letter-spacing:-0.28px;">08.10.2025</div>
<div class="t" style="position:absolute;left:-369.0px;top:656.3139999999999px;width:800px;height:60px;line-height:60px;font-size:22px;color:#5e5e5e;font-weight:400;text-align:center;white-space:pre;">143</div>
<div class="t" style="position:absolute;left:-237.25px;top:657.0139999999999px;width:800px;height:60px;line-height:60px;font-size:27.6px;color:#000;font-weight:700;text-align:center;white-space:pre;-webkit-text-stroke:0.200px #000;letter-spacing:0px;">143</div>
<div class="t" style="position:absolute;left:-63.0px;top:657.0139999999999px;width:800px;height:60px;line-height:60px;font-size:27.6px;color:#000;font-weight:400;text-align:center;white-space:pre;-webkit-text-stroke:0.200px #000;letter-spacing:0px;">Europa</div>
<div class="t" style="position:absolute;left:170.89999999999998px;top:657.0139999999999px;width:800px;height:60px;line-height:60px;font-size:27.6px;color:#000;font-weight:400;text-align:center;white-space:pre;-webkit-text-stroke:0.200px #000;letter-spacing:0.3px;">Mirko Wampirko</div>
<div class="t" style="position:absolute;left:448.20000000000005px;top:657.0139999999999px;width:800px;height:60px;line-height:60px;font-size:27.6px;color:#000;font-weight:400;text-align:center;white-space:pre;-webkit-text-stroke:0.200px #000;letter-spacing:0.4px;">Łabądź</div>
<div class="t" style="position:absolute;left:705.875px;top:657.0139999999999px;width:800px;height:60px;line-height:60px;font-size:27.6px;color:#000;font-weight:400;text-align:center;white-space:pre;-webkit-text-stroke:0.200px #000;letter-spacing:0px;">Parma</div>
<div class="t" style="position:absolute;left:944.875px;top:657.0139999999999px;width:800px;height:60px;line-height:60px;font-size:27.6px;color:#000;font-weight:400;text-align:center;white-space:pre;-webkit-text-stroke:0.200px #000;letter-spacing:0px;">Barcelona</div>
<div class="t" style="position:absolute;left:1134.5px;top:657.0139999999999px;width:800px;height:60px;line-height:60px;font-size:27.6px;color:#000;font-weight:400;text-align:center;white-space:pre;-webkit-text-stroke:0.200px #000;letter-spacing:0px;">4 - 0</div>
<div class="t" style="position:absolute;left:1303.86px;top:657.0139999999999px;width:800px;height:60px;line-height:60px;font-size:27.6px;color:#000;font-weight:400;text-align:center;white-space:pre;-webkit-text-stroke:0.200px #000;letter-spacing:-0.28px;">08.10.2025</div>
<div class="t" style="position:absolute;left:-369.0px;top:712.4699999999999px;width:800px;height:60px;line-height:60px;font-size:22px;color:#5e5e5e;font-weight:400;text-align:center;white-space:pre;">144</div>
<div class="t" style="position:absolute;left:-237.25px;top:713.17px;width:800px;height:60px;line-height:60px;font-size:27.6px;color:#000;font-weight:700;text-align:center;white-space:pre;-webkit-text-stroke:0.200px #000;letter-spacing:0px;">144</div>
<div class="t" style="position:absolute;left:-63.0px;top:713.17px;width:800px;height:60px;line-height:60px;font-size:27.6px;color:#000;font-weight:400;text-align:center;white-space:pre;-webkit-text-stroke:0.200px #000;letter-spacing:0px;">Europa</div>
<div class="t" style="position:absolute;left:170.89999999999998px;top:713.17px;width:800px;height:60px;line-height:60px;font-size:27.6px;color:#000;font-weight:400;text-align:center;white-space:pre;-webkit-text-stroke:0.200px #000;letter-spacing:0.3px;">Mirko Wampirko</div>
<div class="t" style="position:absolute;left:448.20000000000005px;top:713.17px;width:800px;height:60px;line-height:60px;font-size:27.6px;color:#000;font-weight:400;text-align:center;white-space:pre;-webkit-text-stroke:0.200px #000;letter-spacing:0.4px;">Rokokoko</div>
<div class="t" style="position:absolute;left:705.875px;top:713.17px;width:800px;height:60px;line-height:60px;font-size:27.6px;color:#000;font-weight:400;text-align:center;white-space:pre;-webkit-text-stroke:0.200px #000;letter-spacing:0px;">Parma</div>
<div class="t" style="position:absolute;left:944.875px;top:713.17px;width:800px;height:60px;line-height:60px;font-size:27.6px;color:#000;font-weight:400;text-align:center;white-space:pre;-webkit-text-stroke:0.200px #000;letter-spacing:0px;">Barcelona</div>
<div class="t" style="position:absolute;left:1134.5px;top:713.17px;width:800px;height:60px;line-height:60px;font-size:27.6px;color:#000;font-weight:400;text-align:center;white-space:pre;-webkit-text-stroke:0.200px #000;letter-spacing:0px;">5 - 0</div>
<div class="t" style="position:absolute;left:1303.86px;top:713.17px;width:800px;height:60px;line-height:60px;font-size:27.6px;color:#000;font-weight:400;text-align:center;white-space:pre;-webkit-text-stroke:0.200px #000;letter-spacing:-0.28px;">08.10.2025</div>
<div class="t" style="position:absolute;left:-369.0px;top:768.626px;width:800px;height:60px;line-height:60px;font-size:22px;color:#5e5e5e;font-weight:400;text-align:center;white-space:pre;">145</div>
<div class="t" style="position:absolute;left:-237.25px;top:769.326px;width:800px;height:60px;line-height:60px;font-size:27.6px;color:#000;font-weight:700;text-align:center;white-space:pre;-webkit-text-stroke:0.200px #000;letter-spacing:0px;">145</div>
<div class="t" style="position:absolute;left:-63.0px;top:769.326px;width:800px;height:60px;line-height:60px;font-size:27.6px;color:#000;font-weight:400;text-align:center;white-space:pre;-webkit-text-stroke:0.200px #000;letter-spacing:0px;">Europa</div>
<div class="t" style="position:absolute;left:170.89999999999998px;top:769.326px;width:800px;height:60px;line-height:60px;font-size:27.6px;color:#000;font-weight:400;text-align:center;white-space:pre;-webkit-text-stroke:0.200px #000;letter-spacing:0.3px;">Mirko Wampirko</div>
<div class="t" style="position:absolute;left:448.20000000000005px;top:769.326px;width:800px;height:60px;line-height:60px;font-size:27.6px;color:#000;font-weight:400;text-align:center;white-space:pre;-webkit-text-stroke:0.200px #000;letter-spacing:0.4px;">Rokokoko</div>
<div class="t" style="position:absolute;left:705.875px;top:769.326px;width:800px;height:60px;line-height:60px;font-size:27.6px;color:#000;font-weight:400;text-align:center;white-space:pre;-webkit-text-stroke:0.200px #000;letter-spacing:0px;">Parma</div>
<div class="t" style="position:absolute;left:944.875px;top:769.326px;width:800px;height:60px;line-height:60px;font-size:27.6px;color:#000;font-weight:400;text-align:center;white-space:pre;-webkit-text-stroke:0.200px #000;letter-spacing:0px;">Barcelona</div>
<div class="t" style="position:absolute;left:1134.5px;top:769.326px;width:800px;height:60px;line-height:60px;font-size:27.6px;color:#000;font-weight:400;text-align:center;white-space:pre;-webkit-text-stroke:0.200px #000;letter-spacing:0px;">7 - 0</div>
<div class="t" style="position:absolute;left:1303.86px;top:769.326px;width:800px;height:60px;line-height:60px;font-size:27.6px;color:#000;font-weight:400;text-align:center;white-space:pre;-webkit-text-stroke:0.200px #000;letter-spacing:-0.28px;">08.10.2025</div>
<div class="t" style="position:absolute;left:-369.0px;top:824.7819999999999px;width:800px;height:60px;line-height:60px;font-size:22px;color:#5e5e5e;font-weight:400;text-align:center;white-space:pre;">146</div>
<div class="t" style="position:absolute;left:-237.25px;top:825.482px;width:800px;height:60px;line-height:60px;font-size:27.6px;color:#000;font-weight:700;text-align:center;white-space:pre;-webkit-text-stroke:0.200px #000;letter-spacing:0px;">146</div>
<div class="t" style="position:absolute;left:-63.0px;top:825.482px;width:800px;height:60px;line-height:60px;font-size:27.6px;color:#000;font-weight:400;text-align:center;white-space:pre;-webkit-text-stroke:0.200px #000;letter-spacing:0px;">Europa</div>
<div class="t" style="position:absolute;left:170.89999999999998px;top:825.482px;width:800px;height:60px;line-height:60px;font-size:27.6px;color:#000;font-weight:400;text-align:center;white-space:pre;-webkit-text-stroke:0.200px #000;letter-spacing:0.3px;">Mirko Wampirko</div>
<div class="t" style="position:absolute;left:448.20000000000005px;top:825.482px;width:800px;height:60px;line-height:60px;font-size:27.6px;color:#000;font-weight:400;text-align:center;white-space:pre;-webkit-text-stroke:0.200px #000;letter-spacing:0.4px;">Rokokoko</div>
<div class="t" style="position:absolute;left:705.875px;top:825.482px;width:800px;height:60px;line-height:60px;font-size:27.6px;color:#000;font-weight:400;text-align:center;white-space:pre;-webkit-text-stroke:0.200px #000;letter-spacing:0px;">Węgry</div>
<div class="t" style="position:absolute;left:944.875px;top:825.482px;width:800px;height:60px;line-height:60px;font-size:27.6px;color:#000;font-weight:400;text-align:center;white-space:pre;-webkit-text-stroke:0.200px #000;letter-spacing:0px;">Anglia</div>
<div class="t" style="position:absolute;left:1134.5px;top:825.482px;width:800px;height:60px;line-height:60px;font-size:27.6px;color:#000;font-weight:400;text-align:center;white-space:pre;-webkit-text-stroke:0.200px #000;letter-spacing:0px;">9 - 1</div>
<div class="t" style="position:absolute;left:1303.86px;top:825.482px;width:800px;height:60px;line-height:60px;font-size:27.6px;color:#000;font-weight:400;text-align:center;white-space:pre;-webkit-text-stroke:0.200px #000;letter-spacing:-0.28px;">08.10.2025</div>
<div class="t" style="position:absolute;left:-369.0px;top:880.9379999999999px;width:800px;height:60px;line-height:60px;font-size:22px;color:#5e5e5e;font-weight:400;text-align:center;white-space:pre;">147</div>
<div class="t" style="position:absolute;left:-237.25px;top:881.6379999999999px;width:800px;height:60px;line-height:60px;font-size:27.6px;color:#000;font-weight:700;text-align:center;white-space:pre;-webkit-text-stroke:0.200px #000;letter-spacing:0px;">149</div>
<div class="t" style="position:absolute;left:-63.0px;top:881.6379999999999px;width:800px;height:60px;line-height:60px;font-size:27.6px;color:#000;font-weight:400;text-align:center;white-space:pre;-webkit-text-stroke:0.200px #000;letter-spacing:0px;">Europa</div>
<div class="t" style="position:absolute;left:170.89999999999998px;top:881.6379999999999px;width:800px;height:60px;line-height:60px;font-size:27.6px;color:#000;font-weight:400;text-align:center;white-space:pre;-webkit-text-stroke:0.200px #000;letter-spacing:0.3px;">Mirko Wampirko</div>
<div class="t" style="position:absolute;left:448.20000000000005px;top:881.6379999999999px;width:800px;height:60px;line-height:60px;font-size:27.6px;color:#000;font-weight:400;text-align:center;white-space:pre;-webkit-text-stroke:0.200px #000;letter-spacing:0.4px;">Rokokoko</div>
<div class="t" style="position:absolute;left:705.875px;top:881.6379999999999px;width:800px;height:60px;line-height:60px;font-size:27.6px;color:#000;font-weight:400;text-align:center;white-space:pre;-webkit-text-stroke:0.200px #000;letter-spacing:0px;">Węgry</div>
<div class="t" style="position:absolute;left:944.875px;top:881.6379999999999px;width:800px;height:60px;line-height:60px;font-size:27.6px;color:#000;font-weight:400;text-align:center;white-space:pre;-webkit-text-stroke:0.200px #000;letter-spacing:0px;">Anglia</div>
<div class="t" style="position:absolute;left:1134.5px;top:881.6379999999999px;width:800px;height:60px;line-height:60px;font-size:27.6px;color:#000;font-weight:400;text-align:center;white-space:pre;-webkit-text-stroke:0.200px #000;letter-spacing:0px;">1 - 2</div>
<div class="t" style="position:absolute;left:1303.86px;top:881.6379999999999px;width:800px;height:60px;line-height:60px;font-size:27.6px;color:#000;font-weight:400;text-align:center;white-space:pre;-webkit-text-stroke:0.200px #000;letter-spacing:-0.28px;">08.10.2025</div>
<div class="t" style="position:absolute;left:-369.0px;top:937.0939999999999px;width:800px;height:60px;line-height:60px;font-size:22px;color:#5e5e5e;font-weight:400;text-align:center;white-space:pre;">148</div>
<div class="t" style="position:absolute;left:-237.25px;top:937.794px;width:800px;height:60px;line-height:60px;font-size:27.6px;color:#000;font-weight:700;text-align:center;white-space:pre;-webkit-text-stroke:0.200px #000;letter-spacing:0px;">150</div>
<div class="t" style="position:absolute;left:-63.0px;top:937.794px;width:800px;height:60px;line-height:60px;font-size:27.6px;color:#000;font-weight:400;text-align:center;white-space:pre;-webkit-text-stroke:0.200px #000;letter-spacing:0px;">Europa</div>
<div class="t" style="position:absolute;left:170.89999999999998px;top:937.794px;width:800px;height:60px;line-height:60px;font-size:27.6px;color:#000;font-weight:400;text-align:center;white-space:pre;-webkit-text-stroke:0.200px #000;letter-spacing:0.3px;">Mirko Wampirko</div>
<div class="t" style="position:absolute;left:448.20000000000005px;top:937.794px;width:800px;height:60px;line-height:60px;font-size:27.6px;color:#000;font-weight:400;text-align:center;white-space:pre;-webkit-text-stroke:0.200px #000;letter-spacing:0.4px;">Rokokoko</div>
<div class="t" style="position:absolute;left:705.875px;top:937.794px;width:800px;height:60px;line-height:60px;font-size:27.6px;color:#000;font-weight:400;text-align:center;white-space:pre;-webkit-text-stroke:0.200px #000;letter-spacing:0px;">Węgry</div>
<div class="t" style="position:absolute;left:944.875px;top:937.794px;width:800px;height:60px;line-height:60px;font-size:27.6px;color:#000;font-weight:400;text-align:center;white-space:pre;-webkit-text-stroke:0.200px #000;letter-spacing:0px;">Anglia</div>
<div class="t" style="position:absolute;left:1134.5px;top:937.794px;width:800px;height:60px;line-height:60px;font-size:27.6px;color:#000;font-weight:400;text-align:center;white-space:pre;-webkit-text-stroke:0.200px #000;letter-spacing:0px;">9 - 1</div>
<div class="t" style="position:absolute;left:1303.86px;top:937.794px;width:800px;height:60px;line-height:60px;font-size:27.6px;color:#000;font-weight:400;text-align:center;white-space:pre;-webkit-text-stroke:0.200px #000;letter-spacing:-0.28px;">08.10.2025</div>
<div class="t" style="position:absolute;left:-369.0px;top:993.2499999999999px;width:800px;height:60px;line-height:60px;font-size:22px;color:#5e5e5e;font-weight:400;text-align:center;white-space:pre;">149</div>
<div class="t" style="position:absolute;left:-237.25px;top:993.9499999999999px;width:800px;height:60px;line-height:60px;font-size:27.6px;color:#000;font-weight:700;text-align:center;white-space:pre;-webkit-text-stroke:0.200px #000;letter-spacing:0px;">151</div>
<div class="t" style="position:absolute;left:-63.0px;top:993.9499999999999px;width:800px;height:60px;line-height:60px;font-size:27.6px;color:#000;font-weight:400;text-align:center;white-space:pre;-webkit-text-stroke:0.200px #000;letter-spacing:0px;">Europa</div>
<div class="t" style="position:absolute;left:170.89999999999998px;top:993.9499999999999px;width:800px;height:60px;line-height:60px;font-size:27.6px;color:#000;font-weight:400;text-align:center;white-space:pre;-webkit-text-stroke:0.200px #000;letter-spacing:0.3px;">Mirko Wampirko</div>
<div class="t" style="position:absolute;left:448.20000000000005px;top:993.9499999999999px;width:800px;height:60px;line-height:60px;font-size:27.6px;color:#000;font-weight:400;text-align:center;white-space:pre;-webkit-text-stroke:0.200px #000;letter-spacing:0.4px;">Rokokoko</div>
<div class="t" style="position:absolute;left:705.875px;top:993.9499999999999px;width:800px;height:60px;line-height:60px;font-size:27.6px;color:#000;font-weight:400;text-align:center;white-space:pre;-webkit-text-stroke:0.200px #000;letter-spacing:0px;">Parma</div>
<div class="t" style="position:absolute;left:944.875px;top:993.9499999999999px;width:800px;height:60px;line-height:60px;font-size:27.6px;color:#000;font-weight:400;text-align:center;white-space:pre;-webkit-text-stroke:0.200px #000;letter-spacing:0px;">Manchester</div>
<div class="t" style="position:absolute;left:1134.5px;top:993.9499999999999px;width:800px;height:60px;line-height:60px;font-size:27.6px;color:#000;font-weight:400;text-align:center;white-space:pre;-webkit-text-stroke:0.200px #000;letter-spacing:0px;">5 - 0</div>
<div class="t" style="position:absolute;left:1303.86px;top:993.9499999999999px;width:800px;height:60px;line-height:60px;font-size:27.6px;color:#000;font-weight:400;text-align:center;white-space:pre;-webkit-text-stroke:0.200px #000;letter-spacing:-0.28px;">09.10.2025</div>
<div class="t" style="position:absolute;left:-369.0px;top:1049.406px;width:800px;height:60px;line-height:60px;font-size:22px;color:#5e5e5e;font-weight:400;text-align:center;white-space:pre;">150</div>
<div class="t" style="position:absolute;left:-237.25px;top:1050.106px;width:800px;height:60px;line-height:60px;font-size:27.6px;color:#000;font-weight:700;text-align:center;white-space:pre;-webkit-text-stroke:0.200px #000;letter-spacing:0px;">152</div>
<div class="t" style="position:absolute;left:-63.0px;top:1050.106px;width:800px;height:60px;line-height:60px;font-size:27.6px;color:#000;font-weight:400;text-align:center;white-space:pre;-webkit-text-stroke:0.200px #000;letter-spacing:0px;">Europa</div>
<div class="t" style="position:absolute;left:170.89999999999998px;top:1050.106px;width:800px;height:60px;line-height:60px;font-size:27.6px;color:#000;font-weight:400;text-align:center;white-space:pre;-webkit-text-stroke:0.200px #000;letter-spacing:0.3px;">Mirko Wampirko</div>
<div class="t" style="position:absolute;left:448.20000000000005px;top:1050.106px;width:800px;height:60px;line-height:60px;font-size:27.6px;color:#000;font-weight:400;text-align:center;white-space:pre;-webkit-text-stroke:0.200px #000;letter-spacing:0.4px;">Rokokoko</div>
<div class="t" style="position:absolute;left:705.875px;top:1050.106px;width:800px;height:60px;line-height:60px;font-size:27.6px;color:#000;font-weight:400;text-align:center;white-space:pre;-webkit-text-stroke:0.200px #000;letter-spacing:0px;">Parma</div>
<div class="t" style="position:absolute;left:944.875px;top:1050.106px;width:800px;height:60px;line-height:60px;font-size:27.6px;color:#000;font-weight:400;text-align:center;white-space:pre;-webkit-text-stroke:0.200px #000;letter-spacing:0px;">Milano</div>
<div class="t" style="position:absolute;left:1134.5px;top:1050.106px;width:800px;height:60px;line-height:60px;font-size:27.6px;color:#000;font-weight:400;text-align:center;white-space:pre;-webkit-text-stroke:0.200px #000;letter-spacing:0px;">4 - 0</div>
<div class="t" style="position:absolute;left:1303.86px;top:1050.106px;width:800px;height:60px;line-height:60px;font-size:27.6px;color:#000;font-weight:400;text-align:center;white-space:pre;-webkit-text-stroke:0.200px #000;letter-spacing:-0.28px;">09.10.2025</div>
<div class="t" style="position:absolute;left:-369.0px;top:1105.562px;width:800px;height:60px;line-height:60px;font-size:22px;color:#5e5e5e;font-weight:400;text-align:center;white-space:pre;">151</div>
<div class="t" style="position:absolute;left:-237.25px;top:1106.262px;width:800px;height:60px;line-height:60px;font-size:27.6px;color:#000;font-weight:700;text-align:center;white-space:pre;-webkit-text-stroke:0.200px #000;letter-spacing:0px;">153</div>
<div class="t" style="position:absolute;left:-63.0px;top:1106.262px;width:800px;height:60px;line-height:60px;font-size:27.6px;color:#000;font-weight:400;text-align:center;white-space:pre;-webkit-text-stroke:0.200px #000;letter-spacing:0px;">Europa</div>
<div class="t" style="position:absolute;left:170.89999999999998px;top:1106.262px;width:800px;height:60px;line-height:60px;font-size:27.6px;color:#000;font-weight:400;text-align:center;white-space:pre;-webkit-text-stroke:0.200px #000;letter-spacing:0.3px;">Mirko Wampirko</div>
<div class="t" style="position:absolute;left:448.20000000000005px;top:1106.262px;width:800px;height:60px;line-height:60px;font-size:27.6px;color:#000;font-weight:400;text-align:center;white-space:pre;-webkit-text-stroke:0.200px #000;letter-spacing:0.4px;">Rokokoko</div>
<div class="t" style="position:absolute;left:705.875px;top:1106.262px;width:800px;height:60px;line-height:60px;font-size:27.6px;color:#000;font-weight:400;text-align:center;white-space:pre;-webkit-text-stroke:0.200px #000;letter-spacing:0px;">Parma</div>
<div class="t" style="position:absolute;left:944.875px;top:1106.262px;width:800px;height:60px;line-height:60px;font-size:27.6px;color:#000;font-weight:400;text-align:center;white-space:pre;-webkit-text-stroke:0.200px #000;letter-spacing:0px;">Milano</div>
<div class="t" style="position:absolute;left:1134.5px;top:1106.262px;width:800px;height:60px;line-height:60px;font-size:27.6px;color:#000;font-weight:400;text-align:center;white-space:pre;-webkit-text-stroke:0.200px #000;letter-spacing:0px;">6 - 1</div>
<div class="t" style="position:absolute;left:1303.86px;top:1106.262px;width:800px;height:60px;line-height:60px;font-size:27.6px;color:#000;font-weight:400;text-align:center;white-space:pre;-webkit-text-stroke:0.200px #000;letter-spacing:-0.28px;">09.10.2025</div>
<div class="t" style="position:absolute;left:-369.0px;top:1161.718px;width:800px;height:60px;line-height:60px;font-size:22px;color:#5e5e5e;font-weight:400;text-align:center;white-space:pre;">152</div>
<div class="t" style="position:absolute;left:-237.25px;top:1162.4180000000001px;width:800px;height:60px;line-height:60px;font-size:27.6px;color:#000;font-weight:700;text-align:center;white-space:pre;-webkit-text-stroke:0.200px #000;letter-spacing:0px;">154</div>
<div class="t" style="position:absolute;left:-63.0px;top:1162.4180000000001px;width:800px;height:60px;line-height:60px;font-size:27.6px;color:#000;font-weight:400;text-align:center;white-space:pre;-webkit-text-stroke:0.200px #000;letter-spacing:0px;">Europa</div>
<div class="t" style="position:absolute;left:170.89999999999998px;top:1162.4180000000001px;width:800px;height:60px;line-height:60px;font-size:27.6px;color:#000;font-weight:400;text-align:center;white-space:pre;-webkit-text-stroke:0.200px #000;letter-spacing:0.3px;">Mirko Wampirko</div>
<div class="t" style="position:absolute;left:448.20000000000005px;top:1162.4180000000001px;width:800px;height:60px;line-height:60px;font-size:27.6px;color:#000;font-weight:400;text-align:center;white-space:pre;-webkit-text-stroke:0.200px #000;letter-spacing:0.4px;">Rokokoko</div>
<div class="t" style="position:absolute;left:705.875px;top:1162.4180000000001px;width:800px;height:60px;line-height:60px;font-size:27.6px;color:#000;font-weight:400;text-align:center;white-space:pre;-webkit-text-stroke:0.200px #000;letter-spacing:0px;">Parma</div>
<div class="t" style="position:absolute;left:944.875px;top:1162.4180000000001px;width:800px;height:60px;line-height:60px;font-size:27.6px;color:#000;font-weight:400;text-align:center;white-space:pre;-webkit-text-stroke:0.200px #000;letter-spacing:0px;">Milano</div>
<div class="t" style="position:absolute;left:1134.5px;top:1162.4180000000001px;width:800px;height:60px;line-height:60px;font-size:27.6px;color:#000;font-weight:400;text-align:center;white-space:pre;-webkit-text-stroke:0.200px #000;letter-spacing:0px;">1 - 0</div>
<div class="t" style="position:absolute;left:1303.86px;top:1162.4180000000001px;width:800px;height:60px;line-height:60px;font-size:27.6px;color:#000;font-weight:400;text-align:center;white-space:pre;-webkit-text-stroke:0.200px #000;letter-spacing:-0.28px;">09.10.2025</div>
<div class="t" style="position:absolute;left:-369.0px;top:1217.874px;width:800px;height:60px;line-height:60px;font-size:22px;color:#5e5e5e;font-weight:400;text-align:center;white-space:pre;">153</div>
<div class="t" style="position:absolute;left:-237.25px;top:1218.574px;width:800px;height:60px;line-height:60px;font-size:27.6px;color:#000;font-weight:700;text-align:center;white-space:pre;-webkit-text-stroke:0.200px #000;letter-spacing:0px;">155</div>
<div class="t" style="position:absolute;left:-63.0px;top:1218.574px;width:800px;height:60px;line-height:60px;font-size:27.6px;color:#000;font-weight:400;text-align:center;white-space:pre;-webkit-text-stroke:0.200px #000;letter-spacing:0px;">Europa</div>
<div class="t" style="position:absolute;left:170.89999999999998px;top:1218.574px;width:800px;height:60px;line-height:60px;font-size:27.6px;color:#000;font-weight:400;text-align:center;white-space:pre;-webkit-text-stroke:0.200px #000;letter-spacing:0.3px;">Mirko Wampirko</div>
<div class="t" style="position:absolute;left:448.20000000000005px;top:1218.574px;width:800px;height:60px;line-height:60px;font-size:27.6px;color:#000;font-weight:400;text-align:center;white-space:pre;-webkit-text-stroke:0.200px #000;letter-spacing:0.4px;">Rokokoko</div>
<div class="t" style="position:absolute;left:705.875px;top:1218.574px;width:800px;height:60px;line-height:60px;font-size:27.6px;color:#000;font-weight:400;text-align:center;white-space:pre;-webkit-text-stroke:0.200px #000;letter-spacing:0px;">Parma</div>
<div class="t" style="position:absolute;left:944.875px;top:1218.574px;width:800px;height:60px;line-height:60px;font-size:27.6px;color:#000;font-weight:400;text-align:center;white-space:pre;-webkit-text-stroke:0.200px #000;letter-spacing:0px;">Milano</div>
<div class="t" style="position:absolute;left:1134.5px;top:1218.574px;width:800px;height:60px;line-height:60px;font-size:27.6px;color:#000;font-weight:400;text-align:center;white-space:pre;-webkit-text-stroke:0.200px #000;letter-spacing:0px;">3 - 0</div>
<div class="t" style="position:absolute;left:1303.86px;top:1218.574px;width:800px;height:60px;line-height:60px;font-size:27.6px;color:#000;font-weight:400;text-align:center;white-space:pre;-webkit-text-stroke:0.200px #000;letter-spacing:-0.28px;">09.10.2025</div>
<div class="t" style="position:absolute;left:-369.0px;top:1274.03px;width:800px;height:60px;line-height:60px;font-size:22px;color:#5e5e5e;font-weight:400;text-align:center;white-space:pre;">154</div>
<div class="t" style="position:absolute;left:-237.25px;top:1274.73px;width:800px;height:60px;line-height:60px;font-size:27.6px;color:#000;font-weight:700;text-align:center;white-space:pre;-webkit-text-stroke:0.200px #000;letter-spacing:0px;">156</div>
<div class="t" style="position:absolute;left:-63.0px;top:1274.73px;width:800px;height:60px;line-height:60px;font-size:27.6px;color:#000;font-weight:400;text-align:center;white-space:pre;-webkit-text-stroke:0.200px #000;letter-spacing:0px;">Europa</div>
<div class="t" style="position:absolute;left:170.89999999999998px;top:1274.73px;width:800px;height:60px;line-height:60px;font-size:27.6px;color:#000;font-weight:400;text-align:center;white-space:pre;-webkit-text-stroke:0.200px #000;letter-spacing:0.3px;">Mirko Wampirko</div>
<div class="t" style="position:absolute;left:448.20000000000005px;top:1274.73px;width:800px;height:60px;line-height:60px;font-size:27.6px;color:#000;font-weight:400;text-align:center;white-space:pre;-webkit-text-stroke:0.200px #000;letter-spacing:0.4px;">Rokokoko</div>
<div class="t" style="position:absolute;left:705.875px;top:1274.73px;width:800px;height:60px;line-height:60px;font-size:27.6px;color:#000;font-weight:400;text-align:center;white-space:pre;-webkit-text-stroke:0.200px #000;letter-spacing:0px;">Węgry</div>
<div class="t" style="position:absolute;left:944.875px;top:1274.73px;width:800px;height:60px;line-height:60px;font-size:27.6px;color:#000;font-weight:400;text-align:center;white-space:pre;-webkit-text-stroke:0.200px #000;letter-spacing:0px;">Polska</div>
<div class="t" style="position:absolute;left:1134.5px;top:1274.73px;width:800px;height:60px;line-height:60px;font-size:27.6px;color:#000;font-weight:400;text-align:center;white-space:pre;-webkit-text-stroke:0.200px #000;letter-spacing:0px;">6 - 0</div>
<div class="t" style="position:absolute;left:1303.86px;top:1274.73px;width:800px;height:60px;line-height:60px;font-size:27.6px;color:#000;font-weight:400;text-align:center;white-space:pre;-webkit-text-stroke:0.200px #000;letter-spacing:-0.28px;">09.10.2025</div>
<div class="t" style="position:absolute;left:-369.0px;top:1330.186px;width:800px;height:60px;line-height:60px;font-size:22px;color:#5e5e5e;font-weight:400;text-align:center;white-space:pre;">155</div>
<div class="t" style="position:absolute;left:-237.25px;top:1330.886px;width:800px;height:60px;line-height:60px;font-size:27.6px;color:#000;font-weight:700;text-align:center;white-space:pre;-webkit-text-stroke:0.200px #000;letter-spacing:0px;">157</div>
<div class="t" style="position:absolute;left:-63.0px;top:1330.886px;width:800px;height:60px;line-height:60px;font-size:27.6px;color:#000;font-weight:400;text-align:center;white-space:pre;-webkit-text-stroke:0.200px #000;letter-spacing:0px;">Europa</div>
<div class="t" style="position:absolute;left:170.89999999999998px;top:1330.886px;width:800px;height:60px;line-height:60px;font-size:27.6px;color:#000;font-weight:400;text-align:center;white-space:pre;-webkit-text-stroke:0.200px #000;letter-spacing:0.3px;">Mirko Wampirko</div>
<div class="t" style="position:absolute;left:448.20000000000005px;top:1330.886px;width:800px;height:60px;line-height:60px;font-size:27.6px;color:#000;font-weight:400;text-align:center;white-space:pre;-webkit-text-stroke:0.200px #000;letter-spacing:0.4px;">Rokokoko</div>
<div class="t" style="position:absolute;left:705.875px;top:1330.886px;width:800px;height:60px;line-height:60px;font-size:27.6px;color:#000;font-weight:400;text-align:center;white-space:pre;-webkit-text-stroke:0.200px #000;letter-spacing:0px;">Węgry</div>
<div class="t" style="position:absolute;left:944.875px;top:1330.886px;width:800px;height:60px;line-height:60px;font-size:27.6px;color:#000;font-weight:400;text-align:center;white-space:pre;-webkit-text-stroke:0.200px #000;letter-spacing:0px;">Hiszpania</div>
<div class="t" style="position:absolute;left:1134.5px;top:1330.886px;width:800px;height:60px;line-height:60px;font-size:27.6px;color:#000;font-weight:400;text-align:center;white-space:pre;-webkit-text-stroke:0.200px #000;letter-spacing:0px;">7 - 0</div>
<div class="t" style="position:absolute;left:1303.86px;top:1330.886px;width:800px;height:60px;line-height:60px;font-size:27.6px;color:#000;font-weight:400;text-align:center;white-space:pre;-webkit-text-stroke:0.200px #000;letter-spacing:-0.28px;">10.10.2025</div>
<div class="t" style="position:absolute;left:-369.0px;top:1386.3419999999999px;width:800px;height:60px;line-height:60px;font-size:22px;color:#5e5e5e;font-weight:400;text-align:center;white-space:pre;">156</div>
<div class="t" style="position:absolute;left:-237.25px;top:1387.042px;width:800px;height:60px;line-height:60px;font-size:27.6px;color:#000;font-weight:700;text-align:center;white-space:pre;-webkit-text-stroke:0.200px #000;letter-spacing:0px;">158</div>
<div class="t" style="position:absolute;left:-63.0px;top:1387.042px;width:800px;height:60px;line-height:60px;font-size:27.6px;color:#000;font-weight:400;text-align:center;white-space:pre;-webkit-text-stroke:0.200px #000;letter-spacing:0px;">Europa</div>
<div class="t" style="position:absolute;left:170.89999999999998px;top:1387.042px;width:800px;height:60px;line-height:60px;font-size:27.6px;color:#000;font-weight:400;text-align:center;white-space:pre;-webkit-text-stroke:0.200px #000;letter-spacing:0.3px;">Mirko Wampirko</div>
<div class="t" style="position:absolute;left:448.20000000000005px;top:1387.042px;width:800px;height:60px;line-height:60px;font-size:27.6px;color:#000;font-weight:400;text-align:center;white-space:pre;-webkit-text-stroke:0.200px #000;letter-spacing:0.4px;">Rokokoko</div>
<div class="t" style="position:absolute;left:705.875px;top:1387.042px;width:800px;height:60px;line-height:60px;font-size:27.6px;color:#000;font-weight:400;text-align:center;white-space:pre;-webkit-text-stroke:0.200px #000;letter-spacing:0px;">Litwa</div>
<div class="t" style="position:absolute;left:944.875px;top:1387.042px;width:800px;height:60px;line-height:60px;font-size:27.6px;color:#000;font-weight:400;text-align:center;white-space:pre;-webkit-text-stroke:0.200px #000;letter-spacing:0px;">Polska</div>
<div class="t" style="position:absolute;left:1134.5px;top:1387.042px;width:800px;height:60px;line-height:60px;font-size:27.6px;color:#000;font-weight:400;text-align:center;white-space:pre;-webkit-text-stroke:0.200px #000;letter-spacing:0px;">6 - 0</div>
<div class="t" style="position:absolute;left:1303.86px;top:1387.042px;width:800px;height:60px;line-height:60px;font-size:27.6px;color:#000;font-weight:400;text-align:center;white-space:pre;-webkit-text-stroke:0.200px #000;letter-spacing:-0.28px;">12.10.2025</div>
<div class="t" style="position:absolute;left:-369.0px;top:1442.4979999999998px;width:800px;height:60px;line-height:60px;font-size:22px;color:#5e5e5e;font-weight:400;text-align:center;white-space:pre;">157</div>
<div class="t" style="position:absolute;left:-237.25px;top:1443.1979999999999px;width:800px;height:60px;line-height:60px;font-size:27.6px;color:#000;font-weight:700;text-align:center;white-space:pre;-webkit-text-stroke:0.200px #000;letter-spacing:0px;">159</div>
<div class="t" style="position:absolute;left:-63.0px;top:1443.1979999999999px;width:800px;height:60px;line-height:60px;font-size:27.6px;color:#000;font-weight:400;text-align:center;white-space:pre;-webkit-text-stroke:0.200px #000;letter-spacing:0px;">Europa</div>
<div class="t" style="position:absolute;left:170.89999999999998px;top:1443.1979999999999px;width:800px;height:60px;line-height:60px;font-size:27.6px;color:#000;font-weight:400;text-align:center;white-space:pre;-webkit-text-stroke:0.200px #000;letter-spacing:0.3px;">Mirko Wampirko</div>
<div class="t" style="position:absolute;left:448.20000000000005px;top:1443.1979999999999px;width:800px;height:60px;line-height:60px;font-size:27.6px;color:#000;font-weight:400;text-align:center;white-space:pre;-webkit-text-stroke:0.200px #000;letter-spacing:0.4px;">Rokokoko</div>
<div class="t" style="position:absolute;left:705.875px;top:1443.1979999999999px;width:800px;height:60px;line-height:60px;font-size:27.6px;color:#000;font-weight:400;text-align:center;white-space:pre;-webkit-text-stroke:0.200px #000;letter-spacing:0px;">Litwa</div>
<div class="t" style="position:absolute;left:944.875px;top:1443.1979999999999px;width:800px;height:60px;line-height:60px;font-size:27.6px;color:#000;font-weight:400;text-align:center;white-space:pre;-webkit-text-stroke:0.200px #000;letter-spacing:0px;">Polska</div>
<div class="t" style="position:absolute;left:1134.5px;top:1443.1979999999999px;width:800px;height:60px;line-height:60px;font-size:27.6px;color:#000;font-weight:400;text-align:center;white-space:pre;-webkit-text-stroke:0.200px #000;letter-spacing:0px;">3 - 0</div>
<div class="t" style="position:absolute;left:1303.86px;top:1443.1979999999999px;width:800px;height:60px;line-height:60px;font-size:27.6px;color:#000;font-weight:400;text-align:center;white-space:pre;-webkit-text-stroke:0.200px #000;letter-spacing:-0.28px;">12.10.2025</div>
<div class="t" style="position:absolute;left:-369.0px;top:1498.654px;width:800px;height:60px;line-height:60px;font-size:22px;color:#5e5e5e;font-weight:400;text-align:center;white-space:pre;">158</div>
<div class="t" style="position:absolute;left:-237.25px;top:1499.354px;width:800px;height:60px;line-height:60px;font-size:27.6px;color:#000;font-weight:700;text-align:center;white-space:pre;-webkit-text-stroke:0.200px #000;letter-spacing:0px;">160</div>
<div class="t" style="position:absolute;left:-63.0px;top:1499.354px;width:800px;height:60px;line-height:60px;font-size:27.6px;color:#000;font-weight:400;text-align:center;white-space:pre;-webkit-text-stroke:0.200px #000;letter-spacing:0px;">Europa</div>
<div class="t" style="position:absolute;left:170.89999999999998px;top:1499.354px;width:800px;height:60px;line-height:60px;font-size:27.6px;color:#000;font-weight:400;text-align:center;white-space:pre;-webkit-text-stroke:0.200px #000;letter-spacing:0.3px;">Mirko Wampirko</div>
<div class="t" style="position:absolute;left:448.20000000000005px;top:1499.354px;width:800px;height:60px;line-height:60px;font-size:27.6px;color:#000;font-weight:400;text-align:center;white-space:pre;-webkit-text-stroke:0.200px #000;letter-spacing:0.4px;">Rokokoko</div>
<div class="t" style="position:absolute;left:705.875px;top:1499.354px;width:800px;height:60px;line-height:60px;font-size:27.6px;color:#000;font-weight:400;text-align:center;white-space:pre;-webkit-text-stroke:0.200px #000;letter-spacing:0px;">Parma</div>
<div class="t" style="position:absolute;left:944.875px;top:1499.354px;width:800px;height:60px;line-height:60px;font-size:27.6px;color:#000;font-weight:400;text-align:center;white-space:pre;-webkit-text-stroke:0.200px #000;letter-spacing:0px;">Madrid</div>
<div class="t" style="position:absolute;left:1134.5px;top:1499.354px;width:800px;height:60px;line-height:60px;font-size:27.6px;color:#000;font-weight:400;text-align:center;white-space:pre;-webkit-text-stroke:0.200px #000;letter-spacing:0px;">1 - 1</div>
<div class="t" style="position:absolute;left:1303.86px;top:1499.354px;width:800px;height:60px;line-height:60px;font-size:27.6px;color:#000;font-weight:400;text-align:center;white-space:pre;-webkit-text-stroke:0.200px #000;letter-spacing:-0.28px;">12.10.2025</div>
<div class="t" style="position:absolute;left:-369.0px;top:1554.81px;width:800px;height:60px;line-height:60px;font-size:22px;color:#5e5e5e;font-weight:400;text-align:center;white-space:pre;">159</div>
<div class="t" style="position:absolute;left:-237.25px;top:1555.51px;width:800px;height:60px;line-height:60px;font-size:27.6px;color:#000;font-weight:700;text-align:center;white-space:pre;-webkit-text-stroke:0.200px #000;letter-spacing:0px;">161</div>
<div class="t" style="position:absolute;left:-63.0px;top:1555.51px;width:800px;height:60px;line-height:60px;font-size:27.6px;color:#000;font-weight:400;text-align:center;white-space:pre;-webkit-text-stroke:0.200px #000;letter-spacing:0px;">Europa</div>
<div class="t" style="position:absolute;left:170.89999999999998px;top:1555.51px;width:800px;height:60px;line-height:60px;font-size:27.6px;color:#000;font-weight:400;text-align:center;white-space:pre;-webkit-text-stroke:0.200px #000;letter-spacing:0.3px;">Mirko Wampirko</div>
<div class="t" style="position:absolute;left:448.20000000000005px;top:1555.51px;width:800px;height:60px;line-height:60px;font-size:27.6px;color:#000;font-weight:400;text-align:center;white-space:pre;-webkit-text-stroke:0.200px #000;letter-spacing:0.4px;">Rokokoko</div>
<div class="t" style="position:absolute;left:705.875px;top:1555.51px;width:800px;height:60px;line-height:60px;font-size:27.6px;color:#000;font-weight:400;text-align:center;white-space:pre;-webkit-text-stroke:0.200px #000;letter-spacing:0px;">Parma</div>
<div class="t" style="position:absolute;left:944.875px;top:1555.51px;width:800px;height:60px;line-height:60px;font-size:27.6px;color:#000;font-weight:400;text-align:center;white-space:pre;-webkit-text-stroke:0.200px #000;letter-spacing:0px;">Madrid</div>
<div class="t" style="position:absolute;left:1134.5px;top:1555.51px;width:800px;height:60px;line-height:60px;font-size:27.6px;color:#000;font-weight:400;text-align:center;white-space:pre;-webkit-text-stroke:0.200px #000;letter-spacing:0px;">0 - 0</div>
<div class="t" style="position:absolute;left:1303.86px;top:1555.51px;width:800px;height:60px;line-height:60px;font-size:27.6px;color:#000;font-weight:400;text-align:center;white-space:pre;-webkit-text-stroke:0.200px #000;letter-spacing:-0.28px;">12.10.2025</div>
<div class="t" style="position:absolute;left:-369.0px;top:1610.966px;width:800px;height:60px;line-height:60px;font-size:22px;color:#5e5e5e;font-weight:400;text-align:center;white-space:pre;">160</div>
<div class="abs" style="left:79px;top:320px;width:1721px;height:1px;background:#c6c6c6"></div>
<div class="abs" style="left:79px;top:376px;width:1721px;height:1px;background:#c6c6c6"></div>
<div class="abs" style="left:6px;top:376px;width:50px;height:1px;background:#d6d6d6"></div>
<div class="abs" style="left:79px;top:432px;width:1721px;height:1px;background:#c6c6c6"></div>
<div class="abs" style="left:6px;top:432px;width:50px;height:1px;background:#d6d6d6"></div>
<div class="abs" style="left:79px;top:488px;width:1721px;height:1px;background:#c6c6c6"></div>
<div class="abs" style="left:6px;top:488px;width:50px;height:1px;background:#d6d6d6"></div>
<div class="abs" style="left:79px;top:545px;width:1721px;height:1px;background:#c6c6c6"></div>
<div class="abs" style="left:6px;top:545px;width:50px;height:1px;background:#d6d6d6"></div>
<div class="abs" style="left:79px;top:601px;width:1721px;height:1px;background:#c6c6c6"></div>
<div class="abs" style="left:6px;top:601px;width:50px;height:1px;background:#d6d6d6"></div>
<div class="abs" style="left:79px;top:657px;width:1721px;height:1px;background:#c6c6c6"></div>
<div class="abs" style="left:6px;top:657px;width:50px;height:1px;background:#d6d6d6"></div>
<div class="abs" style="left:79px;top:713px;width:1721px;height:1px;background:#c6c6c6"></div>
<div class="abs" style="left:6px;top:713px;width:50px;height:1px;background:#d6d6d6"></div>
<div class="abs" style="left:79px;top:769px;width:1721px;height:1px;background:#c6c6c6"></div>
<div class="abs" style="left:6px;top:769px;width:50px;height:1px;background:#d6d6d6"></div>
<div class="abs" style="left:79px;top:825px;width:1721px;height:1px;background:#c6c6c6"></div>
<div class="abs" style="left:6px;top:825px;width:50px;height:1px;background:#d6d6d6"></div>
<div class="abs" style="left:79px;top:882px;width:1721px;height:1px;background:#c6c6c6"></div>
<div class="abs" style="left:6px;top:882px;width:50px;height:1px;background:#d6d6d6"></div>
<div class="abs" style="left:79px;top:938px;width:1721px;height:1px;background:#c6c6c6"></div>
<div class="abs" style="left:6px;top:938px;width:50px;height:1px;background:#d6d6d6"></div>
<div class="abs" style="left:79px;top:994px;width:1721px;height:1px;background:#c6c6c6"></div>
<div class="abs" style="left:6px;top:994px;width:50px;height:1px;background:#d6d6d6"></div>
<div class="abs" style="left:79px;top:1050px;width:1721px;height:1px;background:#c6c6c6"></div>
<div class="abs" style="left:6px;top:1050px;width:50px;height:1px;background:#d6d6d6"></div>
<div class="abs" style="left:79px;top:1106px;width:1721px;height:1px;background:#c6c6c6"></div>
<div class="abs" style="left:6px;top:1106px;width:50px;height:1px;background:#d6d6d6"></div>
<div class="abs" style="left:79px;top:1162px;width:1721px;height:1px;background:#c6c6c6"></div>
<div class="abs" style="left:6px;top:1162px;width:50px;height:1px;background:#d6d6d6"></div>
<div class="abs" style="left:79px;top:1218px;width:1721px;height:1px;background:#c6c6c6"></div>
<div class="abs" style="left:6px;top:1218px;width:50px;height:1px;background:#d6d6d6"></div>
<div class="abs" style="left:79px;top:1275px;width:1721px;height:1px;background:#c6c6c6"></div>
<div class="abs" style="left:6px;top:1275px;width:50px;height:1px;background:#d6d6d6"></div>
<div class="abs" style="left:79px;top:1331px;width:1721px;height:1px;background:#c6c6c6"></div>
<div class="abs" style="left:6px;top:1331px;width:50px;height:1px;background:#d6d6d6"></div>
<div class="abs" style="left:79px;top:1387px;width:1721px;height:1px;background:#c6c6c6"></div>
<div class="abs" style="left:6px;top:1387px;width:50px;height:1px;background:#d6d6d6"></div>
<div class="abs" style="left:79px;top:1443px;width:1721px;height:1px;background:#c6c6c6"></div>
<div class="abs" style="left:6px;top:1443px;width:50px;height:1px;background:#d6d6d6"></div>
<div class="abs" style="left:79px;top:1499px;width:1721px;height:1px;background:#c6c6c6"></div>
<div class="abs" style="left:6px;top:1499px;width:50px;height:1px;background:#d6d6d6"></div>
<div class="abs" style="left:79px;top:1555px;width:1721px;height:1px;background:#c6c6c6"></div>
<div class="abs" style="left:6px;top:1555px;width:50px;height:1px;background:#d6d6d6"></div>
<div class="abs" style="left:79px;top:1612px;width:1721px;height:1px;background:#c6c6c6"></div>
<div class="abs" style="left:6px;top:1612px;width:50px;height:1px;background:#d6d6d6"></div>
<div class="abs" style="left:79px;top:1668px;width:1721px;height:1px;background:#c6c6c6"></div>
<div class="abs" style="left:79px;top:320px;width:1px;height:1349px;background:#c6c6c6"></div>
<div class="abs" style="left:428px;top:272px;width:1px;height:1397px;background:#c6c6c6"></div>
<div class="abs" style="left:713px;top:272px;width:1px;height:1397px;background:#c6c6c6"></div>
<div class="abs" style="left:982px;top:272px;width:1px;height:1397px;background:#c6c6c6"></div>
<div class="abs" style="left:1229px;top:272px;width:1px;height:1397px;background:#c6c6c6"></div>
<div class="abs" style="left:1460px;top:272px;width:1px;height:1397px;background:#c6c6c6"></div>
<div class="abs" style="left:1608px;top:272px;width:1px;height:1397px;background:#c6c6c6"></div>
<div class="abs" style="left:1799px;top:272px;width:1px;height:1397px;background:#c6c6c6"></div>
<div class="abs" style="left:244.5px;top:272px;width:2.5px;height:1396.5px;background:#6e6a66"></div>
<div class="abs" style="left:79px;top:281px;width:1721px;height:34px;border-radius:9px;background:#fff;border:1px solid #c9c9c9;box-shadow:0 1px 1.5px rgba(0,0,0,.15)"></div>
<div class="abs" style="left:1609px;top:282px;width:190px;height:32px;border-radius:0 8px 8px 0;background:#dcf4dc"></div>
<div class="abs" style="left:246px;top:282px;width:1px;height:32px;background:#d9d9d9"></div>
<div class="abs" style="left:428px;top:282px;width:1px;height:32px;background:#d9d9d9"></div>
<div class="abs" style="left:713px;top:282px;width:1px;height:32px;background:#d9d9d9"></div>
<div class="abs" style="left:982px;top:282px;width:1px;height:32px;background:#d9d9d9"></div>
<div class="abs" style="left:1229px;top:282px;width:1px;height:32px;background:#d9d9d9"></div>
<div class="abs" style="left:1460px;top:282px;width:1px;height:32px;background:#d9d9d9"></div>
<div class="abs" style="left:1608px;top:282px;width:1px;height:32px;background:#d9d9d9"></div>
<div class="t" style="position:absolute;left:-237.25px;top:269.0px;width:800px;height:60px;line-height:60px;font-size:21.5px;color:#5e5e5e;font-weight:400;text-align:center;white-space:pre;">A</div>
<div class="t" style="position:absolute;left:-63.0px;top:269.0px;width:800px;height:60px;line-height:60px;font-size:21.5px;color:#5e5e5e;font-weight:400;text-align:center;white-space:pre;">B</div>
<div class="t" style="position:absolute;left:170.75px;top:269.0px;width:800px;height:60px;line-height:60px;font-size:21.5px;color:#5e5e5e;font-weight:400;text-align:center;white-space:pre;">C</div>
<div class="t" style="position:absolute;left:448.0px;top:269.0px;width:800px;height:60px;line-height:60px;font-size:21.5px;color:#5e5e5e;font-weight:400;text-align:center;white-space:pre;">D</div>
<div class="t" style="position:absolute;left:705.875px;top:269.0px;width:800px;height:60px;line-height:60px;font-size:21.5px;color:#5e5e5e;font-weight:400;text-align:center;white-space:pre;">E</div>
<div class="t" style="position:absolute;left:944.875px;top:269.0px;width:800px;height:60px;line-height:60px;font-size:21.5px;color:#5e5e5e;font-weight:400;text-align:center;white-space:pre;">F</div>
<div class="t" style="position:absolute;left:1134.5px;top:269.0px;width:800px;height:60px;line-height:60px;font-size:21.5px;color:#5e5e5e;font-weight:400;text-align:center;white-space:pre;">G</div>
<div class="t" style="position:absolute;left:1304.0px;top:269.0px;width:800px;height:60px;line-height:60px;font-size:21.5px;color:#5e5e5e;font-weight:400;text-align:center;white-space:pre;">H</div>
<div class="abs" style="left:2398px;top:218px;width:541px;height:1590px;background:#2d2b2c;border-left:2px solid #0e0e0e;border-radius:0 0 22px 0;box-shadow:inset -1.200px -1.200px 0 #525051"></div>
<div class="abs" style="left:2399px;top:270px;width:540px;height:2px;background:#3d3b3c"></div>
<div class="abs" style="left:2408px;top:224px;width:168px;height:40px;border-radius:11px;background:#61c554"></div>
<div class="t" style="position:absolute;left:2091.8px;top:215.0px;width:800px;height:60px;line-height:60px;font-size:26.6px;color:#fff;font-weight:400;text-align:center;white-space:pre;letter-spacing:0.400px;-webkit-text-stroke:0.450px #fff;">Kategorie</div>
<div class="t" style="position:absolute;left:2267.7px;top:215.0px;width:800px;height:60px;line-height:60px;font-size:26.6px;color:#b2b2b2;font-weight:400;text-align:center;white-space:pre;letter-spacing:0.700px;-webkit-text-stroke:0.400px #b2b2b2;">Sortuj</div>
<div class="t" style="position:absolute;left:2446.0px;top:215.0px;width:800px;height:60px;line-height:60px;font-size:26.6px;color:#b2b2b2;font-weight:400;text-align:center;white-space:pre;letter-spacing:0.700px;-webkit-text-stroke:0.400px #b2b2b2;">Filtruj</div>
<div class="abs" style="left:2755px;top:231px;width:2px;height:28px;background:#454344"></div>
<div class="t" style="position:absolute;left:2436px;top:283.0px;width:1200px;height:60px;line-height:60px;font-size:25px;color:#ececec;font-weight:700;text-align:left;white-space:pre;">Kategorie</div>
<div class="abs" style="left:2827px;top:291px;width:76px;height:44px;border-radius:22px;background:#373536;border:1.5px solid #414040"></div>
<div class="abs" style="left:2829px;top:293px;width:40px;height:40px;border-radius:20px;background:#676566"></div>
<div class="abs" style="left:2432px;top:354px;width:476px;height:2px;background:#434142"></div>
<div class="t" style="position:absolute;left:2269.5px;top:378.0px;width:800px;height:60px;line-height:60px;font-size:24.3px;color:#a9a7a8;font-weight:400;text-align:center;white-space:pre;letter-spacing:0.450px;">Grupowanie wierszy w kategoriach</div>
<div class="t" style="position:absolute;left:2269.5px;top:408.0px;width:800px;height:60px;line-height:60px;font-size:24.3px;color:#a9a7a8;font-weight:400;text-align:center;white-space:pre;letter-spacing:0.450px;">pozwala na organizowanie</div>
<div class="t" style="position:absolute;left:2269.5px;top:438.0px;width:800px;height:60px;line-height:60px;font-size:24.3px;color:#a9a7a8;font-weight:400;text-align:center;white-space:pre;letter-spacing:0.450px;">i podsumowywanie tabeli.</div>
<div class="abs" style="left:2480px;top:512px;width:380px;height:40px;border-radius:9px;background:#656364;box-shadow:0 1px 2px rgba(0,0,0,.4)"></div>
<div class="t" style="position:absolute;left:2496px;top:501.0px;width:1200px;height:60px;line-height:60px;font-size:26.4px;color:#ececec;font-weight:400;text-align:left;white-space:pre;letter-spacing:0.350px;">Dodaj kategorię...</div>
<div class="abs" style="left:2824px;top:516px;width:32px;height:32px;border-radius:7px;background:linear-gradient(#5cc154,#3f9b3a)"></div>
<svg class="abs" style="left:2824px;top:516px" width="32" height="32" viewBox="0 0 32 32"><path d="M9.500 13 L16 19.500 L22.500 13" fill="none" stroke="#fff" stroke-width="3" stroke-linecap="round" stroke-linejoin="round"/></svg>
<div class="abs" style="left:54.500px;top:1812.500px;width:2831px;height:89.500px;border-radius:19px;background:linear-gradient(90deg,#2e3033 0%,#2a2829 18%,#262425 50%,#262425 80%,#31252c 100%);border:1.5px solid #4c4a4c"></div>
<svg class="abs" width="0" height="0"><defs><linearGradient id="gf1" x1="0" y1="0" x2="0" y2="1"><stop offset="0" stop-color="#5cc0f8"/><stop offset="1" stop-color="#2c6ee6"/></linearGradient><linearGradient id="gf2" x1="0" y1="0" x2="0" y2="1"><stop offset="0" stop-color="#f0f4f8"/><stop offset="1" stop-color="#cfd9ea"/></linearGradient><linearGradient id="glp" x1="0" y1="0" x2="0" y2="1"><stop offset="0" stop-color="#d2d2d2"/><stop offset="1" stop-color="#adadad"/></linearGradient><linearGradient id="gsf" x1="0" y1="0" x2="0" y2="1"><stop offset="0" stop-color="#3aa0f8"/><stop offset="1" stop-color="#1c6fe0"/></linearGradient><linearGradient id="gml" x1="0" y1="0" x2="0" y2="1"><stop offset="0" stop-color="#1e68ee"/><stop offset="1" stop-color="#52c4fa"/></linearGradient><linearGradient id="gfx" x1="0.7" y1="0" x2="0.3" y2="1"><stop offset="0" stop-color="#ffd83a"/><stop offset="1" stop-color="#f03a5e"/></linearGradient><linearGradient id="gfx2" x1="0" y1="0" x2="0" y2="1"><stop offset="0" stop-color="#a04af0"/><stop offset="1" stop-color="#4a5af0"/></linearGradient><linearGradient id="gms" x1="0" y1="0" x2="0" y2="1"><stop offset="0" stop-color="#8df088"/><stop offset="1" stop-color="#3ec43a"/></linearGradient><linearGradient id="gms2" x1="0" y1="0" x2="0" y2="1"><stop offset="0" stop-color="#ffffff"/><stop offset="1" stop-color="#c8ecc6"/></linearGradient><linearGradient id="gtx" x1="0" y1="0" x2="0" y2="1"><stop offset="0" stop-color="#8c56ea"/><stop offset="1" stop-color="#47288f"/></linearGradient><linearGradient id="gwe" x1="0" y1="0" x2="0" y2="1"><stop offset="0" stop-color="#2a5cb6"/><stop offset="1" stop-color="#52a2ea"/></linearGradient><linearGradient id="gft" x1="0" y1="0" x2="0" y2="1"><stop offset="0" stop-color="#86ee82"/><stop offset="1" stop-color="#3cc23a"/></linearGradient><linearGradient id="gft2" x1="0" y1="0" x2="0" y2="1"><stop offset="0" stop-color="#ffffff"/><stop offset="1" stop-color="#c8e8c6"/></linearGradient><linearGradient id="gas" x1="0" y1="0" x2="0" y2="1"><stop offset="0" stop-color="#50b8f6"/><stop offset="1" stop-color="#1c5ee0"/></linearGradient><linearGradient id="gno" x1="0" y1="0" x2="0" y2="1"><stop offset="0" stop-color="#fbdc56"/><stop offset="1" stop-color="#f6c838"/></linearGradient><linearGradient id="gpg" x1="0" y1="0" x2="0" y2="1"><stop offset="0" stop-color="#f9b44c"/><stop offset="1" stop-color="#ee842e"/></linearGradient><linearGradient id="gnu" x1="0" y1="0" x2="0" y2="1"><stop offset="0" stop-color="#9af682"/><stop offset="1" stop-color="#30be2c"/></linearGradient><linearGradient id="gsp" x1="0" y1="0" x2="0" y2="1"><stop offset="0" stop-color="#dfe3e6"/><stop offset="1" stop-color="#7c7c7c"/></linearGradient><linearGradient id="gmu" x1="0" y1="0" x2="0" y2="1"><stop offset="0" stop-color="#f8697a"/><stop offset="1" stop-color="#e63846"/></linearGradient><linearGradient id="gsg" x1="0" y1="0" x2="0" y2="1"><stop offset="0" stop-color="#3c4af2"/><stop offset="1" stop-color="#1f2de0"/></linearGradient><linearGradient id="gwa" x1="0" y1="0" x2="0" y2="1"><stop offset="0" stop-color="#8df08c"/><stop offset="1" stop-color="#3cbe3c"/></linearGradient><linearGradient id="gbs" x1="0" y1="0" x2="0" y2="1"><stop offset="0" stop-color="#4c84f2"/><stop offset="1" stop-color="#0000ae"/></linearGradient><linearGradient id="gbk" x1="0" y1="0" x2="0" y2="1"><stop offset="0" stop-color="#f9a63a"/><stop offset="1" stop-color="#ee6228"/></linearGradient><linearGradient id="gcl" x1="0" y1="0" x2="0" y2="1"><stop offset="0" stop-color="#3a3a3c"/><stop offset="1" stop-color="#1a1a1c"/></linearGradient><linearGradient id="gdr" x1="0" y1="0" x2="1" y2="1"><stop offset="0" stop-color="#acde7e"/><stop offset="1" stop-color="#488f46"/></linearGradient><linearGradient id="gxc" x1="0" y1="0" x2="0" y2="1"><stop offset="0" stop-color="#52c2f8"/><stop offset="1" stop-color="#2868ee"/></linearGradient></defs></svg>
<svg class="abs t" style="left:68.5px;top:1826.7px" width="54.59" height="54.59" viewBox="0 0 54 54"><clipPath id="cpf"><rect width="54" height="54" rx="12.500"/></clipPath><g clip-path="url(#cpf)"><rect width="54" height="54" fill="url(#gf1)"/><path d="M31 0C27 9 24 19 23.500 30H31C30.500 38 31.500 47 33.500 54H54V0Z" fill="url(#gf2)"/><path d="M31 0C27 9 24 19 23.500 30H31C30.500 38 31.500 47 33.500 54" fill="none" stroke="#1c2a44" stroke-width="1.100" opacity=".55"/><path d="M10.500 36.500Q26 49 43.500 36.500" fill="none" stroke="#16202e" stroke-width="2.100" stroke-linecap="round"/><rect x="13.200" y="15" width="2.300" height="6.500" rx="1.100" fill="#16202e"/><rect x="38.800" y="15" width="2.300" height="6.500" rx="1.100" fill="#16202e"/></g></svg>
<svg class="abs t" style="left:141.0px;top:1826.7px" width="54.59" height="54.59" viewBox="0 0 54 54"><rect x="0" y="0" width="54" height="54" rx="12.5" fill="url(#glp)" /><rect x="9.0" y="9.0" width="9.800" height="9.800" rx="2.600" fill="#5fd64e"/><rect x="22.2" y="9.0" width="9.800" height="9.800" rx="2.600" fill="#f9b92c"/><rect x="35.4" y="9.0" width="9.800" height="9.800" rx="2.600" fill="#f5902a"/><rect x="9.0" y="22.2" width="9.800" height="9.800" rx="2.600" fill="#d83020"/><rect x="22.2" y="22.2" width="9.800" height="9.800" rx="2.600" fill="#b5bdc2"/><rect x="35.4" y="22.2" width="9.800" height="9.800" rx="2.600" fill="#f0476c"/><rect x="9.0" y="35.4" width="9.800" height="9.800" rx="2.600" fill="#9946de"/><rect x="22.2" y="35.4" width="9.800" height="9.800" rx="2.600" fill="#2c8ff8"/><rect x="35.4" y="35.4" width="9.800" height="9.800" rx="2.600" fill="#52d6ae"/></svg>
<svg class="abs t" style="left:213.5px;top:1826.7px" width="54.59" height="54.59" viewBox="0 0 54 54"><rect x="0" y="0" width="54" height="54" rx="12.5" fill="#f6f6f6" /><circle cx="27" cy="27" r="23.300" fill="url(#gsf)"/><path d="M48.5 27.0L45.5 27.0" stroke="#fff" stroke-width=".9" opacity=".85"/><path d="M48.2 30.7L46.5 30.4" stroke="#fff" stroke-width=".9" opacity=".85"/><path d="M47.2 34.4L44.4 33.3" stroke="#fff" stroke-width=".9" opacity=".85"/><path d="M45.6 37.8L44.1 36.9" stroke="#fff" stroke-width=".9" opacity=".85"/><path d="M43.5 40.8L41.2 38.9" stroke="#fff" stroke-width=".9" opacity=".85"/><path d="M40.8 43.5L39.7 42.2" stroke="#fff" stroke-width=".9" opacity=".85"/><path d="M37.8 45.6L36.2 43.0" stroke="#fff" stroke-width=".9" opacity=".85"/><path d="M34.4 47.2L33.8 45.6" stroke="#fff" stroke-width=".9" opacity=".85"/><path d="M30.7 48.2L30.2 45.2" stroke="#fff" stroke-width=".9" opacity=".85"/><path d="M27.0 48.5L27.0 46.8" stroke="#fff" stroke-width=".9" opacity=".85"/><path d="M23.3 48.2L23.8 45.2" stroke="#fff" stroke-width=".9" opacity=".85"/><path d="M19.6 47.2L20.2 45.6" stroke="#fff" stroke-width=".9" opacity=".85"/><path d="M16.3 45.6L17.8 43.0" stroke="#fff" stroke-width=".9" opacity=".85"/><path d="M13.2 43.5L14.3 42.2" stroke="#fff" stroke-width=".9" opacity=".85"/><path d="M10.5 40.8L12.8 38.9" stroke="#fff" stroke-width=".9" opacity=".85"/><path d="M8.4 37.8L9.9 36.9" stroke="#fff" stroke-width=".9" opacity=".85"/><path d="M6.8 34.4L9.6 33.3" stroke="#fff" stroke-width=".9" opacity=".85"/><path d="M5.8 30.7L7.5 30.4" stroke="#fff" stroke-width=".9" opacity=".85"/><path d="M5.5 27.0L8.5 27.0" stroke="#fff" stroke-width=".9" opacity=".85"/><path d="M5.8 23.3L7.5 23.6" stroke="#fff" stroke-width=".9" opacity=".85"/><path d="M6.8 19.6L9.6 20.7" stroke="#fff" stroke-width=".9" opacity=".85"/><path d="M8.4 16.2L9.9 17.1" stroke="#fff" stroke-width=".9" opacity=".85"/><path d="M10.5 13.2L12.8 15.1" stroke="#fff" stroke-width=".9" opacity=".85"/><path d="M13.2 10.5L14.3 11.8" stroke="#fff" stroke-width=".9" opacity=".85"/><path d="M16.2 8.4L17.7 11.0" stroke="#fff" stroke-width=".9" opacity=".85"/><path d="M19.6 6.8L20.2 8.4" stroke="#fff" stroke-width=".9" opacity=".85"/><path d="M23.3 5.8L23.8 8.8" stroke="#fff" stroke-width=".9" opacity=".85"/><path d="M27.0 5.5L27.0 7.2" stroke="#fff" stroke-width=".9" opacity=".85"/><path d="M30.7 5.8L30.2 8.8" stroke="#fff" stroke-width=".9" opacity=".85"/><path d="M34.4 6.8L33.8 8.4" stroke="#fff" stroke-width=".9" opacity=".85"/><path d="M37.8 8.4L36.2 11.0" stroke="#fff" stroke-width=".9" opacity=".85"/><path d="M40.8 10.5L39.7 11.8" stroke="#fff" stroke-width=".9" opacity=".85"/><path d="M43.5 13.2L41.2 15.1" stroke="#fff" stroke-width=".9" opacity=".85"/><path d="M45.6 16.2L44.1 17.1" stroke="#fff" stroke-width=".9" opacity=".85"/><path d="M47.2 19.6L44.4 20.7" stroke="#fff" stroke-width=".9" opacity=".85"/><path d="M48.2 23.3L46.5 23.6" stroke="#fff" stroke-width=".9" opacity=".85"/><path d="M43 11.500L24.600 24.600L29.400 29.400Z" fill="#f0483c"/><path d="M11 42.500L24.600 24.600L29.400 29.400Z" fill="#f4f4f4"/><path d="M43 11.500L29.400 29.400L27 27Z" fill="#c8362c"/><path d="M11 42.500L29.400 29.400L27 27Z" fill="#d0d0d0"/></svg>
<svg class="abs t" style="left:286.0px;top:1826.7px" width="54.59" height="54.59" viewBox="0 0 54 54"><rect x="0" y="0" width="54" height="54" rx="12.5" fill="url(#gml)" /><rect x="8" y="15" width="38" height="24.500" rx="3" fill="#f4f4f4"/><path d="M8.500 16.500L27 31.500L45.500 16.500" fill="none" stroke="#c4c8cc" stroke-width="1.500"/><path d="M8.500 38.500L21.500 27M45.500 38.500L32.500 27" stroke="#d4d6da" stroke-width="1.200"/></svg>
<svg class="abs t" style="left:358.5px;top:1826.7px" width="54.59" height="54.59" viewBox="0 0 54 54"><rect x="0" y="0" width="54" height="54" rx="12.5" fill="#1f1238" /><circle cx="27.500" cy="29" r="21" fill="url(#gfx)"/><path d="M30 3Q38 6 41 15Q47 21 47.500 30L38 20Q33 12 30 3Z" fill="#ffcb2e"/><path d="M6.500 26Q6 16 12 10Q12 15 15 17Q20 13 26 14Q20 17 19 22Z" fill="#ff9a2a"/><circle cx="28" cy="28.500" r="11.500" fill="url(#gfx2)"/><path d="M14 21Q20 17 27 19.500Q32 21 30 25Q26 26.500 22 24.500Q17 22.500 14 21Z" fill="#ffb22e"/></svg>
<svg class="abs t" style="left:431.0px;top:1826.7px" width="54.59" height="54.59" viewBox="0 0 54 54"><rect x="0" y="0" width="54" height="54" rx="12.5" fill="#f3f3f3" /><circle cx="27" cy="27.500" r="23" fill="#4ca454"/><path d="M27 27.500L7.080 16A23 23 0 0 1 46.920 16Z" fill="#dd4b3e"/><path d="M27 27.500L46.920 16A23 23 0 0 1 27 50.500Z" fill="#f4c13c"/><path d="M27 27.500L7.080 16A23 23 0 0 0 27 50.500Z" fill="#4ca454"/><path d="M27 16H46.920A23 23 0 0 0 7.080 16Z" fill="#dd4b3e"/><path d="M36.960 33.250L27 50.500A23 23 0 0 0 46.920 16H27Z" fill="#f4c13c"/><path d="M17.040 33.250L7.080 16A23 23 0 0 0 27 50.500L36.960 33.250Z" fill="#4ca454"/><circle cx="27" cy="27.500" r="11.200" fill="#fff"/><circle cx="27" cy="27.500" r="9" fill="#4a84ea"/></svg>
<svg class="abs t" style="left:504.7px;top:1826.7px" width="54.59" height="54.59" viewBox="0 0 54 54"><rect x="0" y="0" width="54" height="54" rx="12.5" fill="url(#gms)" /><ellipse cx="27" cy="25.500" rx="20" ry="16.500" fill="url(#gms2)"/><path d="M14 35Q14 41.500 9.500 44.500Q17 44.500 21.500 39.500Z" fill="#d4f0d2"/></svg>
<svg class="abs t" style="left:577.2px;top:1826.7px" width="54.59" height="54.59" viewBox="0 0 54 54"><rect x="0" y="0" width="54" height="54" rx="12.5" fill="#0a0a0a" stroke="#c6d0d4" stroke-width="1.600"/><rect x="5.500" y="5.500" width="43" height="43" rx="8" fill="#212121"/><path d="M9.500 10.500L15.500 13.700L9.500 16.900" fill="none" stroke="#f0f0f0" stroke-width="1.700"/><path d="M18 19.800H25.500" stroke="#f0f0f0" stroke-width="1.800"/></svg>
<svg class="abs t" style="left:648.5px;top:1826.7px" width="54.59" height="54.59" viewBox="0 0 54 54"><rect x="0" y="0" width="54" height="54" rx="12.5" fill="url(#gtx)" /><circle cx="19" cy="17.500" r="13.500" fill="#dedcee"/><circle cx="39.500" cy="24" r="9.500" fill="#d6d4ea"/><path d="M40 31L45.500 37L44.500 29Z" fill="#d6d4ea"/><circle cx="25" cy="36" r="13" fill="#d2d2e6"/><path d="M17 45L19 51.500L24 47.500Z" fill="#d2d2e6"/><text x="19" y="22" font-family="Liberation Sans, sans-serif" font-size="15" fill="#5a34a8" text-anchor="middle">t</text><text x="39.500" y="28.500" font-family="Liberation Sans, sans-serif" font-size="13" fill="#5a34a8" text-anchor="middle">x</text><text x="25" y="41" font-family="Liberation Sans, sans-serif" font-size="15" fill="#5a34a8" text-anchor="middle">t</text></svg>
<svg class="abs t" style="left:721.0px;top:1826.7px" width="54.59" height="54.59" viewBox="0 0 54 54"><rect x="0" y="0" width="54" height="54" rx="12.5" fill="#fafafa" /><ellipse cx="27" cy="14.500" rx="7.300" ry="11.500" fill="#f7a028" opacity=".82" transform="rotate(0 27 27)"/><ellipse cx="27" cy="14.500" rx="7.300" ry="11.500" fill="#f4d030" opacity=".82" transform="rotate(45 27 27)"/><ellipse cx="27" cy="14.500" rx="7.300" ry="11.500" fill="#a8cc40" opacity=".82" transform="rotate(90 27 27)"/><ellipse cx="27" cy="14.500" rx="7.300" ry="11.500" fill="#58b868" opacity=".82" transform="rotate(135 27 27)"/><ellipse cx="27" cy="14.500" rx="7.300" ry="11.500" fill="#5aa4dc" opacity=".82" transform="rotate(180 27 27)"/><ellipse cx="27" cy="14.500" rx="7.300" ry="11.500" fill="#7a78cc" opacity=".82" transform="rotate(225 27 27)"/><ellipse cx="27" cy="14.500" rx="7.300" ry="11.500" fill="#c06cb8" opacity=".82" transform="rotate(270 27 27)"/><ellipse cx="27" cy="14.500" rx="7.300" ry="11.500" fill="#ee5a48" opacity=".82" transform="rotate(315 27 27)"/></svg>
<svg class="abs t" style="left:793.5px;top:1826.7px" width="54.59" height="54.59" viewBox="0 0 54 54"><rect x="0" y="0" width="54" height="54" rx="12.5" fill="url(#gwe)" /><circle cx="36.500" cy="22.500" r="9.500" fill="#f8c83c"/><path d="M14 41Q7.500 41 7.500 35Q7.500 29.500 13 29Q14 20.500 22 19.500Q29.500 19 32 26Q38.500 25.500 40 31Q41 35 38.500 38.500Q37 41 33 41Z" fill="#f2f6fc"/></svg>
<svg class="abs t" style="left:866.0px;top:1826.7px" width="54.59" height="54.59" viewBox="0 0 54 54"><clipPath id="cpm"><rect width="54" height="54" rx="12.500"/></clipPath><g clip-path="url(#cpm)"><rect width="54" height="54" fill="#6ed268"/><path d="M0 8L30 28L54 40V54H0Z" fill="#f0f0ee"/><path d="M0 24H13V54H0Z" fill="#e88ac8"/><path d="M29 38L50 54H29Z" fill="#f8cf48"/><path d="M0 0H14V12L0 8Z" fill="#9adf7c"/><rect x="14.500" y="0" width="11" height="30" fill="#4a8cf2"/><rect x="12.500" y="0" width="2" height="54" fill="#fff"/><rect x="25.500" y="0" width="2.500" height="54" fill="#fff"/><circle cx="49" cy="3" r="15" fill="none" stroke="#c4c4c8" stroke-width="5"/><circle cx="49" cy="3" r="10" fill="#74d46c"/><circle cx="20" cy="33.500" r="12" fill="#f4f6fa"/><circle cx="20" cy="33.500" r="10" fill="#3a86f2"/><path d="M20 25.500L26 40.500L20 37L14 40.500Z" fill="#fff"/></g></svg>
<svg class="abs t" style="left:938.5px;top:1826.7px" width="54.59" height="54.59" viewBox="0 0 54 54"><rect x="0" y="0" width="54" height="54" rx="12.5" fill="url(#gft)" /><rect x="8" y="15.500" width="25" height="23" rx="5.500" fill="url(#gft2)"/><path d="M36 24.500L44.500 17.500Q46 16.500 46 18.500V35.500Q46 37.500 44.500 36.500L36 29.500Z" fill="url(#gft2)"/></svg>
<svg class="abs t" style="left:1011.0px;top:1827px" width="56.62" height="54.59" viewBox="0 0 56 54"><rect x="44" y="9" width="10" height="10" rx="2" fill="#c8c8c8"/><rect x="46" y="19" width="8" height="9" fill="#58a8e8"/><rect x="46" y="28" width="8" height="9" fill="#f09a28"/><rect x="46" y="37" width="8" height="9" rx="2" fill="#6cc850"/><rect x="0" y="0" width="51" height="54" rx="12.500" fill="#b88c4a"/><circle cx="26" cy="27" r="16.500" fill="none" stroke="#a07838" stroke-width="1.500"/><circle cx="26" cy="22.500" r="6" fill="#a47a3a"/><path d="M13 36.500Q26 27 39 36.500Q34 43 26 43Q18 43 13 36.500Z" fill="#a47a3a"/></svg>
<svg class="abs t" style="left:1083.5px;top:1826.7px" width="54.59" height="54.59" viewBox="0 0 54 54"><clipPath id="cpc"><rect width="54" height="54" rx="12.500"/></clipPath><g clip-path="url(#cpc)"><rect width="54" height="54" fill="#f8f6f4"/><rect width="54" height="17" fill="#ee564a"/></g><text x="27" y="13" font-family="Liberation Sans, sans-serif" font-size="10.500" font-weight="700" fill="#fff" text-anchor="middle">PAŹ</text><text x="27" y="46" font-family="Liberation Sans, sans-serif" font-size="33.500" fill="#1c1c1c" stroke="#f8f6f4" stroke-width="0.900" text-anchor="middle" letter-spacing="-1.200">12</text></svg>
<svg class="abs t" style="left:1156.0px;top:1826.7px" width="54.59" height="54.59" viewBox="0 0 54 54"><rect x="0" y="0" width="54" height="54" rx="12.5" fill="url(#gas)" /><g stroke="#f4f8ff" stroke-width="4.200" stroke-linecap="round" fill="none"><path d="M24 12L39.500 41"/><path d="M28.500 12L20 28"/><path d="M14.500 38L13 41"/><path d="M9.500 33.500H26"/><path d="M36.500 33.500H44.500"/></g></svg>
<svg class="abs t" style="left:1228.5px;top:1826.7px" width="54.59" height="54.59" viewBox="0 0 54 54"><clipPath id="cpn"><rect width="54" height="54" rx="12.500"/></clipPath><g clip-path="url(#cpn)"><rect width="54" height="54" fill="#f4f2ee"/><rect width="54" height="13.500" fill="url(#gno)"/><path d="M0 16H54" stroke="#c8c6c0" stroke-width=".8" stroke-dasharray="1 1"/><path d="M0 26.500H54M0 39.500H54" stroke="#dcdad6" stroke-width=".9"/></g></svg>
<svg class="abs t" style="left:1301.0px;top:1826.7px" width="54.59" height="54.59" viewBox="0 0 54 54"><rect x="0" y="0" width="54" height="54" rx="12.5" fill="url(#gpg)" /><path d="M8.500 46H45" stroke="#f8d8a8" stroke-width="1.600"/><path d="M9.500 45L13 36L39.500 11.500Q42 9.500 43.500 11Q45 12.500 43 15L17 41.500Z" fill="#f8f8f8"/><path d="M9.500 45L11.500 40L14.200 42.800Z" fill="#b0b0b0"/><path d="M24 26L27 29" stroke="#a8a8a8" stroke-width="1.400"/></svg>
<svg class="abs t" style="left:1373.5px;top:1826.7px" width="54.59" height="54.59" viewBox="0 0 54 54"><rect x="0" y="0" width="54" height="54" rx="12.5" fill="url(#gnu)" /><rect x="10" y="35" width="6.500" height="11" rx="1.200" fill="#f6fff4"/><rect x="19.500" y="25.500" width="6.500" height="20.500" rx="1.200" fill="#f6fff4"/><rect x="29" y="8" width="6.500" height="38" rx="1.200" fill="#f6fff4"/><rect x="38.500" y="18" width="6.500" height="28" rx="1.200" fill="#f6fff4"/></svg>
<svg class="abs t" style="left:1446.0px;top:1826.7px" width="54.59" height="54.59" viewBox="0 0 54 54"><rect x="0" y="0" width="54" height="54" rx="12.5" fill="url(#gsp)" /><circle cx="27" cy="27" r="23.500" fill="#5a5a5c"/><circle cx="27" cy="27" r="21" fill="none" stroke="#aeaeb0" stroke-width="2.400" stroke-dasharray="1.300 1.300"/><circle cx="27" cy="27" r="17.500" fill="#8e8e90"/><circle cx="27" cy="27" r="14.500" fill="#6a6a6c"/><g stroke="#a4a4a6" stroke-width="2.600" stroke-linecap="round"><path d="M27 27V10.500"/><path d="M27 27L12.700 35.300"/><path d="M27 27L41.300 35.300"/></g><circle cx="27" cy="27" r="2.800" fill="#c4c4c6"/></svg>
<svg class="abs t" style="left:1518.5px;top:1826.7px" width="54.59" height="54.59" viewBox="0 0 54 54"><rect x="0" y="0" width="54" height="54" rx="12.5" fill="url(#gmu)" /><path d="M21 14.500L39 9.500V35.500Q39 40.500 33.500 41.500Q29 42 29 38.500Q29 35 33.500 34Q36 33.500 36 31V17.500L24 20.800V39.500Q24 44.500 18.500 45.500Q14 46 14 42.500Q14 39 18.500 38Q21 37.500 21 35Z" fill="#fff"/></svg>
<div class="abs" style="left:1587px;top:1823px;width:62px;height:62px;background:#000"></div>
<div class="abs" style="left:1587px;top:1875px;width:62px;height:8px;background:#52c44c"></div>
<div class="abs" style="left:1625px;top:1872px;width:24px;height:4px;background:#52c44c"></div>
<div class="abs" style="left:1587px;top:1882.500px;width:62px;height:2.500px;background:#e8483c"></div>
<svg class="abs t" style="left:1663.5px;top:1826.7px" width="54.59" height="54.59" viewBox="0 0 54 54"><rect x="0" y="0" width="54" height="54" rx="12.5" fill="url(#gsg)" /><circle cx="27.500" cy="26" r="17" fill="#fff"/><path d="M13 36L9 45L19 42Z" fill="#fff"/><circle cx="27.500" cy="26" r="19.500" fill="none" stroke="#fff" stroke-width="1.500" stroke-dasharray="4.200 1.700"/><path d="M10.500 37.500L7 47L17.500 44" fill="none" stroke="#fff" stroke-width="1.500" stroke-dasharray="4 1.600"/></svg>
<svg class="abs t" style="left:1736.0px;top:1826.7px" width="54.59" height="54.59" viewBox="0 0 54 54"><rect x="0" y="0" width="54" height="54" rx="12.5" fill="url(#gwa)" /><path d="M27.500 6.500A20 20 0 1 1 17.500 43.800L7 47L10.300 37A20 20 0 0 1 27.500 6.500Z" fill="none" stroke="#f4f4f4" stroke-width="3.200"/><path d="M19 17.500Q21 15.500 22.500 18L24 21.500Q24.500 23 23 24.500Q24.500 29 30.500 31.500Q32 30 33.500 30.500L37 32.500Q38.500 33.500 37 35.500Q34.500 38.500 30 37Q20 33.500 17.800 23.500Q17.300 19.500 19 17.500Z" fill="#f4f4f4"/></svg>
<svg class="abs t" style="left:1808.5px;top:1826.7px" width="54.59" height="54.59" viewBox="0 0 54 54"><rect x="0" y="0" width="54" height="54" rx="12.5" fill="#fefefe" /><path d="M27.500 6.500C15.500 6.500 6.500 15 6.500 26.200C6.500 32.200 9 37.300 13.200 40.800V47.500L19.500 44.200C22 45 24.600 45.400 27.500 45.400C39.500 45.400 48.500 37.200 48.500 26.200S39.500 6.500 27.500 6.500Z" fill="#2a74f4"/><path d="M14.500 31.500L22.500 20.500L28.500 25.500L40 20.500L32 31.500L26 26.500Z" fill="#fff"/></svg>
<svg class="abs t" style="left:1881.0px;top:1826.7px" width="54.59" height="54.59" viewBox="0 0 54 54"><rect x="0" y="0" width="54" height="54" rx="12.5" fill="#fbfbfb" /><path d="M15 7.500H33L44 18.500V43Q44 47.500 39.500 47.500H15Q10.500 47.500 10.500 43V12Q10.500 7.500 15 7.500Z" fill="#e4e4e4" stroke="#6e6e6e" stroke-width="3.200" stroke-linejoin="round"/><path d="M27 7.500V24H44" fill="#f6f6f6" stroke="none"/><path d="M33 6H45V18Z" fill="#8c8c8c"/><path d="M27.500 9V23.500H42" fill="none" stroke="#f8f8f8" stroke-width="1"/></svg>
<svg class="abs t" style="left:1953.5px;top:1826.7px" width="54.59" height="54.59" viewBox="0 0 54 54"><rect x="0" y="0" width="54" height="54" rx="12.5" fill="url(#gbs)" /><rect x="9" y="9" width="36" height="36" rx="2" fill="none" stroke="#fff" stroke-width="2.400"/><rect x="14.500" y="14.500" width="25" height="25" rx="2" fill="none" stroke="#fff" stroke-width="2.400"/><rect x="20" y="20" width="14" height="14" rx="2" fill="none" stroke="#fff" stroke-width="2.400"/><circle cx="27" cy="27" r="2.600" fill="#fff"/></svg>
<svg class="abs t" style="left:2026.0px;top:1826.7px" width="54.59" height="54.59" viewBox="0 0 54 54"><rect x="0" y="0" width="54" height="54" rx="12.5" fill="#5dac4a" /><path d="M9 12.500H27V15.500H23.500L28 34L40.500 15.500H36V12.500H47V15L19 45H13.500L14 15.500H9Z" fill="#f0f2ee"/></svg>
<svg class="abs" style="left:2094.5px;top:1826px" width="66" height="63.800" viewBox="0 0 60 58"><path d="M17 21Q26 8 40 14Q46 8 50.500 3Q52 14 49.500 24Q48 37 34 40Q22 41 15 33Q13 27 17 21Z" fill="#7a7264"/><path d="M20 30Q30 38 44 30Q42 38 33 39.500Q25 40 20 30Z" fill="#5c5548"/><ellipse cx="8.500" cy="24" rx="6.500" ry="7.500" fill="#1a1a1a" transform="rotate(-25 8.500 24)"/><circle cx="6.800" cy="21" r="1.800" fill="#8a8a8a"/><circle cx="20.500" cy="19.500" r="5.500" fill="#f4f4f4"/><circle cx="31.500" cy="17" r="7" fill="#f4f4f4"/><circle cx="21" cy="20" r="2.300" fill="#222"/><circle cx="33" cy="17.500" r="2.900" fill="#222"/><path d="M37 31L51 44" stroke="#c47a3a" stroke-width="2.400"/><path d="M50 42L56 52L54 53.500L48.500 44Z" fill="#222"/></svg>
<svg class="abs t" style="left:2171.0px;top:1826.7px" width="54.59" height="54.59" viewBox="0 0 54 54"><rect x="0" y="0" width="54" height="54" rx="12.5" fill="#fdfdfd" /><path d="M27 3.500Q28.500 3.500 30 5L50 25Q52 27.500 49.500 29.500L43 33H11L4.500 29.500Q2 27.500 4 25L24 5Q25.500 3.500 27 3.500Z" fill="#15161c"/><path d="M27 6L38 17L34 15.500L32 19L28.500 14.500L25 19.500L22 15L16 17.500Z" fill="#f4f4f6"/><path d="M12 35Q20 33 27 37Q36 33 42 36Q38 40 33 40Q35 47 28 49Q22 47 24 42Q16 43 12 35Z" fill="#15161c"/><ellipse cx="44.500" cy="38.500" rx="2.800" ry="1.500" fill="#15161c"/><ellipse cx="16" cy="43.500" rx="3" ry="1.400" fill="#15161c"/><ellipse cx="39.500" cy="43.500" rx="1.800" ry="1" fill="#15161c"/></svg>
<svg class="abs t" style="left:2243.5px;top:1826.7px" width="54.59" height="54.59" viewBox="0 0 54 54"><rect x="0" y="0" width="54" height="54" rx="12.5" fill="url(#gbk)" /><path d="M8.500 17Q8.500 13 13 12.500Q21 12 26 15V41.500Q20 37 8.500 40.500Z" fill="#fff"/><path d="M45.500 17Q45.500 13 41 12.500Q33 12 28 15V41.500Q34 37 45.500 40.500Z" fill="#fff"/></svg>
<svg class="abs t" style="left:2316.0px;top:1826.7px" width="54.59" height="54.59" viewBox="0 0 54 54"><rect x="0" y="0" width="54" height="54" rx="12.5" fill="#d5d3d0" /><rect x="13" y="7" width="28" height="40" rx="5.500" fill="url(#gcl)"/><rect x="16.500" y="10.500" width="21" height="8.500" rx="2.200" fill="#555557"/><circle cx="19.0" cy="25.5" r="2.700" fill="#c8c6c2"/><circle cx="27.0" cy="25.5" r="2.700" fill="#c8c6c2"/><circle cx="35.0" cy="25.5" r="2.700" fill="#f29a2c"/><circle cx="19.0" cy="33.3" r="2.700" fill="#c8c6c2"/><circle cx="27.0" cy="33.3" r="2.700" fill="#c8c6c2"/><circle cx="35.0" cy="33.3" r="2.700" fill="#f29a2c"/><circle cx="19.0" cy="41.1" r="2.700" fill="#c8c6c2"/><circle cx="27.0" cy="41.1" r="2.700" fill="#c8c6c2"/><circle cx="35.0" cy="41.1" r="2.700" fill="#f29a2c"/></svg>
<svg class="abs t" style="left:2388.5px;top:1826.7px" width="54.59" height="54.59" viewBox="0 0 54 54"><clipPath id="cpd"><rect width="54" height="54" rx="12.500"/></clipPath><g clip-path="url(#cpd)"><rect width="54" height="54" fill="url(#gdr)"/><path d="M0 16Q8 22 10 30Q14 34 18 32Q16 24 17 14Q17 6 22 3L26 0L27 3L30 1L30 4.500L33.500 3.500L32 7Q36 11 36 14L31 15.500Q34 19 31 19L27 17Q24 22 27 30Q28 36 33 33Q40 24 54 17V19Q41 27 34 38Q30 44 34 48Q42 46 45 50V54H0Z" fill="#fff"/><path d="M4 38Q10 36 12 42L6 44Z" fill="#5aa050"/><path d="M22 50L29 42L30 49L36 46L28 53Z" fill="#6aae5a"/></g></svg>
<svg class="abs t" style="left:2492.4px;top:1826.7px" width="54.59" height="54.59" viewBox="0 0 54 54"><rect x="0" y="0" width="54" height="54" rx="12.5" fill="url(#gxc)" /><g opacity=".18" stroke="#fff" stroke-width=".7"><path d="M0 13.500H54M0 27H54M0 40.500H54M13.500 0V54M27 0V54M40.500 0V54"/></g><path d="M10 43L34 17L38.500 21L14.500 47Q12 49 10.500 47Q8.500 45 10 43Z" fill="#2c2e34"/><path d="M27 9.500Q34 5.500 40 10.500L48 18.500L49.500 17.500L51 19.500L45 25.500L43 24L44 22.500L37 16Q32 12.500 27 9.500Z" fill="#3a3c44"/></svg>
<svg class="abs" style="left:2561px;top:1820px" width="67" height="67" viewBox="0 0 67 67"><defs><radialGradient id="rqz"><stop offset="0" stop-color="#2c62d8"/><stop offset="1" stop-color="#0e2c8c"/></radialGradient><linearGradient id="sqz" x1="0" y1="0" x2="1" y2="1"><stop offset="0" stop-color="#f4f4f4"/><stop offset=".5" stop-color="#9a9a9e"/><stop offset="1" stop-color="#e8e8ea"/></linearGradient></defs><circle cx="33.500" cy="33.500" r="32.500" fill="url(#rqz)" stroke="#060810" stroke-width="2"/><path d="M17 22H36L33 28H21V40H30V36H26L28.500 31H36V46H17Q12 46 12 41V27Q12 22 17 22Z" fill="url(#sqz)"/><path d="M34 22H56V28L45 40H56V46H33V40L44 28H32Z" fill="url(#sqz)"/></svg>
<svg class="abs" style="left:2638.9px;top:1817px;overflow:visible" width="54" height="66" viewBox="0 -10 54 66"><rect x="1" y="6" width="52" height="48" rx="9" fill="#b81c20"/><rect x="1" y="2" width="52" height="45" rx="9" fill="#e02a2e"/><rect x="4.500" y="5" width="45" height="38.500" rx="7" fill="#161230"/><g stroke="#28408a" stroke-width=".6" opacity=".8"><path d="M4.500 18H49.500M4.500 31H49.500M19.500 5V43.500M34.500 5V43.500"/></g><ellipse cx="27" cy="25" rx="10.500" ry="8" fill="#0c0c10"/><rect x="25.800" y="8" width="2.400" height="17" fill="#b8b8c0"/><circle cx="27" cy="2.500" r="10" fill="#e0161c"/><circle cx="24" cy="-1" r="3" fill="#f0545a" opacity=".7"/><ellipse cx="11" cy="36" rx="6" ry="4.500" fill="#3a84e8"/><ellipse cx="11" cy="34.800" rx="4.500" ry="3" fill="#6cb0f8"/></svg>
<div class="abs" style="left:2468.500px;top:1824px;width:1.500px;height:66px;background:#5c5a5b"></div>
<div class="abs" style="left:2718.500px;top:1824px;width:1.500px;height:66px;background:#5c5a5b"></div>
<svg class="abs" style="left:2741px;top:1822px" width="58" height="64" viewBox="0 0 58 64"><path d="M12.500 0.500H33L38 6H12.500Z" fill="#e8e8e8"/><rect x="0.500" y="5.500" width="57" height="58" fill="#fff"/><path d="M3 8.500H54.500L48.500 14H8.500V55.500L3 61Z" fill="#8cbc2c"/><path d="M54.500 8.500V61H3L8.500 55.500H48.500V14Z" fill="#5c5c5c"/><rect x="8.500" y="14" width="40" height="41.500" fill="#fff"/><ellipse cx="28" cy="38" rx="12" ry="13" fill="#8a8a8a"/><circle cx="28" cy="22.500" r="5" fill="#a4a4a4"/><ellipse cx="25" cy="40" rx="5" ry="7" fill="#d8d8d8"/></svg>
<svg class="abs" style="left:2818px;top:1819px" width="52" height="68" viewBox="0 0 52 68"><defs><linearGradient id="gtr" x1="0" y1="0" x2="1" y2="0"><stop offset="0" stop-color="#7a7c7e"/><stop offset=".4" stop-color="#929496"/><stop offset="1" stop-color="#5c5e60"/></linearGradient></defs><path d="M8 4L16 1L22 5L30 0.500L37 4L44 2L47 9L5 10Z" fill="#e4e4e4"/><path d="M14 6L22 5L24 9L15 10Z" fill="#4a9ae0"/><path d="M30 4L37 4L36 9L29 9Z" fill="#d8583a"/><path d="M24 3L30 3L29 8L24 8Z" fill="#7cc46a"/><path d="M2 9Q26 14 50 9L44.500 60Q44 64.500 39 65H13Q8 64.500 7.500 60Z" fill="url(#gtr)" opacity=".92"/><ellipse cx="26" cy="9.500" rx="24" ry="3.500" fill="none" stroke="#b8babc" stroke-width="1.200"/></svg>
<div class="abs" style="left:91.5px;top:1889.700px;width:8px;height:8px;border-radius:4px;background:#a3a0a2"></div>
<div class="abs" style="left:236.5px;top:1889.700px;width:8px;height:8px;border-radius:4px;background:#a3a0a2"></div>
<div class="abs" style="left:309.0px;top:1889.700px;width:8px;height:8px;border-radius:4px;background:#a3a0a2"></div>
<div class="abs" style="left:381.5px;top:1889.700px;width:8px;height:8px;border-radius:4px;background:#a3a0a2"></div>
<div class="abs" style="left:454.0px;top:1889.700px;width:8px;height:8px;border-radius:4px;background:#a3a0a2"></div>
<div class="abs" style="left:527.7px;top:1889.700px;width:8px;height:8px;border-radius:4px;background:#a3a0a2"></div>
<div class="abs" style="left:600.2px;top:1889.700px;width:8px;height:8px;border-radius:4px;background:#a3a0a2"></div>
<div class="abs" style="left:671.5px;top:1889.700px;width:8px;height:8px;border-radius:4px;background:#a3a0a2"></div>
<div class="abs" style="left:744.0px;top:1889.700px;width:8px;height:8px;border-radius:4px;background:#a3a0a2"></div>
<div class="abs" style="left:816.5px;top:1889.700px;width:8px;height:8px;border-radius:4px;background:#a3a0a2"></div>
<div class="abs" style="left:889.0px;top:1889.700px;width:8px;height:8px;border-radius:4px;background:#a3a0a2"></div>
<div class="abs" style="left:1034.0px;top:1889.700px;width:8px;height:8px;border-radius:4px;background:#a3a0a2"></div>
<div class="abs" style="left:1106.5px;top:1889.700px;width:8px;height:8px;border-radius:4px;background:#a3a0a2"></div>
<div class="abs" style="left:1251.5px;top:1889.700px;width:8px;height:8px;border-radius:4px;background:#a3a0a2"></div>
<div class="abs" style="left:1324.0px;top:1889.700px;width:8px;height:8px;border-radius:4px;background:#a3a0a2"></div>
<div class="abs" style="left:1396.5px;top:1889.700px;width:8px;height:8px;border-radius:4px;background:#a3a0a2"></div>
<div class="abs" style="left:1469.0px;top:1889.700px;width:8px;height:8px;border-radius:4px;background:#a3a0a2"></div>
<div class="abs" style="left:1541.5px;top:1889.700px;width:8px;height:8px;border-radius:4px;background:#a3a0a2"></div>
<div class="abs" style="left:1614.0px;top:1889.700px;width:8px;height:8px;border-radius:4px;background:#a3a0a2"></div>
<div class="abs" style="left:1686.5px;top:1889.700px;width:8px;height:8px;border-radius:4px;background:#a3a0a2"></div>
<div class="abs" style="left:1759.0px;top:1889.700px;width:8px;height:8px;border-radius:4px;background:#a3a0a2"></div>
<div class="abs" style="left:1831.5px;top:1889.700px;width:8px;height:8px;border-radius:4px;background:#a3a0a2"></div>
<div class="abs" style="left:1904.0px;top:1889.700px;width:8px;height:8px;border-radius:4px;background:#a3a0a2"></div>
<div class="abs" style="left:2049.0px;top:1889.700px;width:8px;height:8px;border-radius:4px;background:#a3a0a2"></div>
<div class="abs" style="left:2121.5px;top:1889.700px;width:8px;height:8px;border-radius:4px;background:#a3a0a2"></div>
<div class="abs" style="left:2266.5px;top:1889.700px;width:8px;height:8px;border-radius:4px;background:#a3a0a2"></div>
<div class="abs" style="left:2339.0px;top:1889.700px;width:8px;height:8px;border-radius:4px;background:#a3a0a2"></div>
<div class="abs" style="left:2411.5px;top:1889.700px;width:8px;height:8px;border-radius:4px;background:#a3a0a2"></div>
<div class="abs" style="left:2661.9px;top:1889.700px;width:8px;height:8px;border-radius:4px;background:#a3a0a2"></div>
</div></body></html>
